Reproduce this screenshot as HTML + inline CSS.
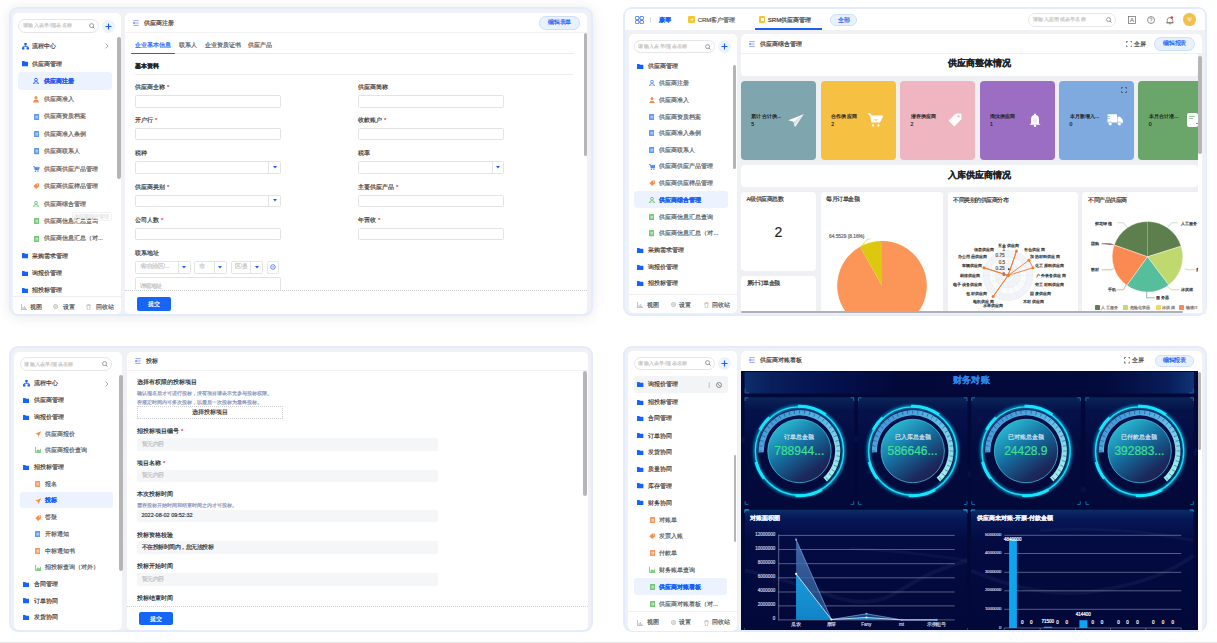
<!DOCTYPE html><html><head><meta charset="utf-8"><style>
html,body{margin:0;padding:0}
body{width:1217px;height:643px;position:relative;overflow:hidden;background:#fff;font-family:"Liberation Sans",sans-serif}
.a{position:absolute;display:block}
.t{position:absolute;white-space:nowrap;-webkit-text-stroke:.18px currentColor}
.t i{font-style:normal;display:inline-block;width:1em;text-align:center}
</style></head><body>
<div class="a" style="left:0.00px;top:641.50px;width:1217.00px;height:1.50px;background:#e6e6e6"></div>
<div class="a" style="left:8.70px;top:6.80px;width:584.10px;height:309.10px;border:2px solid #e3ecfc;border-radius:9px;background:#eff1f5;box-shadow:0 1px 14px rgba(0,0,0,.09);box-sizing:border-box"></div>
<div class="a" style="left:12.60px;top:12.60px;width:108.40px;height:301.30px;background:#fff;border-radius:5px"></div>
<div class="a" style="left:18.40px;top:19.00px;width:80.30px;height:14.40px;border:.7px solid #e6e6e6;border-radius:7.2px;box-sizing:border-box;background:#fff"></div>
<div class="t" style="left:22.90px;top:22.49px;height:7.42px;line-height:7.42px;font-size:5.3px;color:#c6c6c6;font-weight:normal;"><i>请</i><i>输</i><i>入</i><i>表</i><i>单</i>/<i>报</i><i>表</i><i>名</i><i>称</i></div>
<svg class="a" style="left:88.70px;top:23.20px;" width="6" height="6" viewBox="0 0 6 6"><circle cx="2.6" cy="2.6" r="2" fill="none" stroke="#777" stroke-width=".7"/><path d="M4 4L5.5 5.5" stroke="#777" stroke-width=".7"/></svg>
<div class="a" style="left:101.90px;top:19.50px;width:13.00px;height:13.00px;border-radius:50%;background:#edf3fe"></div>
<svg class="a" style="left:104.90px;top:22.50px;" width="7" height="7" viewBox="0 0 7 7"><path d="M3.5 .5V6.5M.5 3.5H6.5" stroke="#1d5ef6" stroke-width="1.1"/></svg>
<div class="a" style="left:117.00px;top:37.30px;width:3.80px;height:141.70px;background:#b5b5b5;border-radius:2px"></div>
<div class="a" style="left:18.10px;top:72.40px;width:93.50px;height:17.40px;background:#ecf3fe;border-radius:3px"></div>
<svg class="a" style="left:21.80px;top:43.00px;" width="7" height="6.5" viewBox="0 0 7 6.5"><rect x="2.3" y="0" width="2.4" height="2.2" fill="#1d5ef6"/><path d="M3.5 2.2V3.4M1.2 4.2V3.4H5.8V4.2" stroke="#1d5ef6" stroke-width=".8" fill="none"/><rect x="0" y="4.2" width="2.4" height="2.3" fill="#1d5ef6"/><rect x="4.6" y="4.2" width="2.4" height="2.3" fill="#1d5ef6"/></svg>
<div class="t" style="left:32.00px;top:42.00px;height:8.40px;line-height:8.40px;font-size:6px;color:#3a3a3a;font-weight:normal;"><i>流</i><i>程</i><i>中</i><i>心</i></div>
<svg class="a" style="left:21.90px;top:61.40px;" width="6.4" height="5.3" viewBox="0 0 6.4 5.3"><path d="M0 .5Q0 0 .5 0H2.3L3 .8H5.9Q6.4 .8 6.4 1.3V4.8Q6.4 5.3 5.9 5.3H.5Q0 5.3 0 4.8Z" fill="#1563ff"/></svg>
<div class="t" style="left:32.00px;top:59.80px;height:8.40px;line-height:8.40px;font-size:6px;color:#3a3a3a;font-weight:normal;"><i>供</i><i>应</i><i>商</i><i>管</i><i>理</i></div>
<svg class="a" style="left:33.20px;top:77.90px;" width="6" height="6.5" viewBox="0 0 6 6.5"><circle cx="3" cy="1.7" r="1.4" fill="none" stroke="#1d5ef6" stroke-width=".9"/><path d="M.5 6.2Q.5 3.6 3 3.6Q5.5 3.6 5.5 6.2Z" fill="none" stroke="#1d5ef6" stroke-width=".9"/></svg>
<div class="t" style="left:43.90px;top:76.90px;height:8.40px;line-height:8.40px;font-size:6px;color:#1d5ef6;font-weight:bold;"><i>供</i><i>应</i><i>商</i><i>注</i><i>册</i></div>
<svg class="a" style="left:33.20px;top:96.10px;" width="6" height="6.5" viewBox="0 0 6 6.5"><circle cx="3" cy="1.6" r="1.5" fill="#f68c4e"/><path d="M.2 6.5Q.2 3.5 3 3.5Q5.8 3.5 5.8 6.5Z" fill="#f68c4e"/></svg>
<div class="t" style="left:43.90px;top:95.10px;height:8.40px;line-height:8.40px;font-size:6px;color:#5a5a5a;font-weight:normal;"><i>供</i><i>应</i><i>商</i><i>准</i><i>入</i></div>
<svg class="a" style="left:33.50px;top:113.50px;" width="5.6" height="6.2" viewBox="0 0 5.6 6.2"><rect x="0" y="0" width="5.6" height="6.2" rx=".8" fill="#4f8af5" opacity=".9"/><path d="M1.4 2.3H4.2M1.4 3.9H4.2" stroke="#fff" stroke-width=".7"/></svg>
<div class="t" style="left:43.90px;top:112.30px;height:8.40px;line-height:8.40px;font-size:6px;color:#5a5a5a;font-weight:normal;"><i>供</i><i>应</i><i>商</i><i>资</i><i>质</i><i>档</i><i>案</i></div>
<svg class="a" style="left:33.50px;top:131.00px;" width="5.6" height="6.2" viewBox="0 0 5.6 6.2"><rect x="0" y="0" width="5.6" height="6.2" rx=".8" fill="#4f8af5" opacity=".9"/><path d="M1.4 2.3H4.2M1.4 3.9H4.2" stroke="#fff" stroke-width=".7"/></svg>
<div class="t" style="left:43.90px;top:129.80px;height:8.40px;line-height:8.40px;font-size:6px;color:#5a5a5a;font-weight:normal;"><i>供</i><i>应</i><i>商</i><i>准</i><i>入</i><i>条</i><i>例</i></div>
<svg class="a" style="left:33.50px;top:148.40px;" width="5.6" height="6.2" viewBox="0 0 5.6 6.2"><rect x="0" y="0" width="5.6" height="6.2" rx=".8" fill="#4f8af5" opacity=".9"/><path d="M1.4 2.3H4.2M1.4 3.9H4.2" stroke="#fff" stroke-width=".7"/></svg>
<div class="t" style="left:43.90px;top:147.20px;height:8.40px;line-height:8.40px;font-size:6px;color:#5a5a5a;font-weight:normal;"><i>供</i><i>应</i><i>商</i><i>联</i><i>系</i><i>人</i></div>
<svg class="a" style="left:33.20px;top:166.00px;" width="6.5" height="6" viewBox="0 0 6.5 6"><path d="M.2 .5H1.3L2 4H5.6L6.3 1.3H1.5Z" fill="#4f8af5" stroke="#4f8af5" stroke-width=".6" stroke-linejoin="round"/><circle cx="2.4" cy="5.3" r=".7" fill="#4f8af5"/><circle cx="5" cy="5.3" r=".7" fill="#4f8af5"/></svg>
<div class="t" style="left:43.90px;top:164.80px;height:8.40px;line-height:8.40px;font-size:6px;color:#5a5a5a;font-weight:normal;"><i>供</i><i>应</i><i>商</i><i>供</i><i>应</i><i>产</i><i>品</i><i>管</i><i>理</i></div>
<svg class="a" style="left:33.20px;top:183.20px;" width="6.5" height="6" viewBox="0 0 6.5 6"><path d="M.4 3.2L3.3 .4H6.1V3.2L3.2 6Z" fill="#f68c4e"/><circle cx="4.7" cy="1.8" r=".6" fill="#fff"/></svg>
<div class="t" style="left:43.90px;top:182.00px;height:8.40px;line-height:8.40px;font-size:6px;color:#5a5a5a;font-weight:normal;"><i>供</i><i>应</i><i>商</i><i>供</i><i>应</i><i>样</i><i>品</i><i>管</i><i>理</i></div>
<svg class="a" style="left:33.20px;top:200.50px;" width="6" height="6.5" viewBox="0 0 6 6.5"><circle cx="3" cy="1.7" r="1.4" fill="none" stroke="#66c166" stroke-width=".9"/><path d="M.5 6.2Q.5 3.6 3 3.6Q5.5 3.6 5.5 6.2Z" fill="none" stroke="#66c166" stroke-width=".9"/></svg>
<div class="t" style="left:43.90px;top:199.50px;height:8.40px;line-height:8.40px;font-size:6px;color:#5a5a5a;font-weight:normal;"><i>供</i><i>应</i><i>商</i><i>综</i><i>合</i><i>管</i><i>理</i></div>
<svg class="a" style="left:33.50px;top:218.30px;" width="5.6" height="6.2" viewBox="0 0 5.6 6.2"><rect x="0" y="0" width="5.6" height="6.2" rx=".8" fill="#66c166" opacity=".9"/><path d="M1.4 2.3H4.2M1.4 3.9H4.2" stroke="#fff" stroke-width=".7"/></svg>
<div class="t" style="left:43.90px;top:217.10px;height:8.40px;line-height:8.40px;font-size:6px;color:#5a5a5a;font-weight:normal;"><i>供</i><i>应</i><i>商</i><i>信</i><i>息</i><i>汇</i><i>总</i><i>查</i><i>询</i></div>
<svg class="a" style="left:33.50px;top:235.50px;" width="5.6" height="6.2" viewBox="0 0 5.6 6.2"><rect x="0" y="0" width="5.6" height="6.2" rx=".8" fill="#66c166" opacity=".9"/><path d="M1.4 2.3H4.2M1.4 3.9H4.2" stroke="#fff" stroke-width=".7"/></svg>
<div class="t" style="left:43.90px;top:234.30px;height:8.40px;line-height:8.40px;font-size:6px;color:#5a5a5a;font-weight:normal;"><i>供</i><i>应</i><i>商</i><i>信</i><i>息</i><i>汇</i><i>总</i><i>（</i><i>对</i>...</div>
<svg class="a" style="left:21.90px;top:253.40px;" width="6.4" height="5.3" viewBox="0 0 6.4 5.3"><path d="M0 .5Q0 0 .5 0H2.3L3 .8H5.9Q6.4 .8 6.4 1.3V4.8Q6.4 5.3 5.9 5.3H.5Q0 5.3 0 4.8Z" fill="#1563ff"/></svg>
<div class="t" style="left:32.00px;top:251.80px;height:8.40px;line-height:8.40px;font-size:6px;color:#3a3a3a;font-weight:normal;"><i>采</i><i>购</i><i>需</i><i>求</i><i>管</i><i>理</i></div>
<svg class="a" style="left:21.90px;top:270.60px;" width="6.4" height="5.3" viewBox="0 0 6.4 5.3"><path d="M0 .5Q0 0 .5 0H2.3L3 .8H5.9Q6.4 .8 6.4 1.3V4.8Q6.4 5.3 5.9 5.3H.5Q0 5.3 0 4.8Z" fill="#1563ff"/></svg>
<div class="t" style="left:32.00px;top:269.00px;height:8.40px;line-height:8.40px;font-size:6px;color:#3a3a3a;font-weight:normal;"><i>询</i><i>报</i><i>价</i><i>管</i><i>理</i></div>
<svg class="a" style="left:21.90px;top:288.00px;" width="6.4" height="5.3" viewBox="0 0 6.4 5.3"><path d="M0 .5Q0 0 .5 0H2.3L3 .8H5.9Q6.4 .8 6.4 1.3V4.8Q6.4 5.3 5.9 5.3H.5Q0 5.3 0 4.8Z" fill="#1563ff"/></svg>
<div class="t" style="left:32.00px;top:286.40px;height:8.40px;line-height:8.40px;font-size:6px;color:#3a3a3a;font-weight:normal;"><i>招</i><i>投</i><i>标</i><i>管</i><i>理</i></div>
<svg class="a" style="left:104.50px;top:43.00px;" width="4" height="6" viewBox="0 0 4 6"><path d="M.6 .5L3 3L.6 5.5" fill="none" stroke="#888" stroke-width=".7"/></svg>
<div class="a" style="left:71.50px;top:211.70px;width:40.50px;height:9.60px;border:.6px solid #f2f2f2;border-radius:2px;box-sizing:border-box"></div>
<div class="t" style="left:74.00px;top:213.00px;height:7.00px;line-height:7.00px;font-size:5px;color:#e6e6e6;font-weight:normal;"><i>供</i><i>应</i><i>商</i><i>综</i><i>合</i><i>管</i><i>理</i></div>
<div class="a" style="left:12.60px;top:296.00px;width:108.40px;height:0.60px;background:#eee"></div>
<svg class="a" style="left:21.00px;top:303.80px;" width="6" height="6" viewBox="0 0 6 6"><path d="M.5 0V5.5H6" fill="none" stroke="#999" stroke-width=".6"/><path d="M2 5V3M3.3 5V2M4.6 5V3.5" stroke="#999" stroke-width=".6"/></svg>
<div class="t" style="left:30.40px;top:302.60px;height:8.40px;line-height:8.40px;font-size:6px;color:#555;font-weight:normal;"><i>视</i><i>图</i></div>
<svg class="a" style="left:52.90px;top:304.30px;" width="5" height="5" viewBox="0 0 5 5"><circle cx="2.5" cy="2.5" r="2.1" fill="none" stroke="#aaa" stroke-width=".7"/><circle cx="2.5" cy="2.5" r=".8" fill="none" stroke="#aaa" stroke-width=".6"/></svg>
<div class="t" style="left:63.00px;top:302.60px;height:8.40px;line-height:8.40px;font-size:6px;color:#555;font-weight:normal;"><i>设</i><i>置</i></div>
<svg class="a" style="left:85.90px;top:303.80px;" width="5" height="6.2" viewBox="0 0 5 6.2"><path d="M.3 1.3H4.7M1.7 1.2V.4H3.3V1.2M.9 1.5L1.3 5.9H3.7L4.1 1.5" fill="none" stroke="#aaa" stroke-width=".6"/></svg>
<div class="t" style="left:95.80px;top:302.60px;height:8.40px;line-height:8.40px;font-size:6px;color:#555;font-weight:normal;"><i>回</i><i>收</i><i>站</i></div>
<div class="a" style="left:125.00px;top:12.60px;width:462.00px;height:301.30px;background:#fff;border-radius:5px"></div>
<div class="a" style="left:125.00px;top:32.40px;width:462.00px;height:0.80px;background:#f3f3f3"></div>
<svg class="a" style="left:133.00px;top:20.20px;" width="6" height="6" viewBox="0 0 6 6"><path d="M.3 .6H5.7M.3 3H5.7M.3 5.4H5.7" stroke="#8b9ef5" stroke-width=".9"/><rect x=".3" y="2.4" width="1.5" height="1.2" fill="#4c6df0"/></svg>
<div class="t" style="left:144.00px;top:19.00px;height:8.40px;line-height:8.40px;font-size:6px;color:#333;font-weight:normal;"><i>供</i><i>应</i><i>商</i><i>注</i><i>册</i></div>
<div class="a" style="left:539.10px;top:16.00px;width:40.90px;height:13.70px;background:#e8f1fe;border:.8px solid #cddffc;border-radius:6.8px;box-sizing:border-box"></div>
<div class="t" style="left:409.55px;width:300px;text-align:center;top:18.93px;height:7.84px;line-height:7.84px;font-size:5.6px;color:#1d5ef6;font-weight:normal;"><i>编</i><i>辑</i><i>表</i><i>单</i></div>
<div class="a" style="left:583.80px;top:33.00px;width:3.00px;height:123.00px;background:#b5b5b5;border-radius:2px"></div>
<div class="t" style="left:135.40px;top:41.30px;height:8.40px;line-height:8.40px;font-size:6px;color:#1d5ef6;font-weight:normal;"><i>企</i><i>业</i><i>基</i><i>本</i><i>信</i><i>息</i></div>
<div class="t" style="left:178.60px;top:41.30px;height:8.40px;line-height:8.40px;font-size:6px;color:#555;font-weight:normal;"><i>联</i><i>系</i><i>人</i></div>
<div class="t" style="left:204.80px;top:41.30px;height:8.40px;line-height:8.40px;font-size:6px;color:#555;font-weight:normal;"><i>企</i><i>业</i><i>资</i><i>质</i><i>证</i><i>书</i></div>
<div class="t" style="left:247.80px;top:41.30px;height:8.40px;line-height:8.40px;font-size:6px;color:#555;font-weight:normal;"><i>供</i><i>应</i><i>产</i><i>品</i></div>
<div class="a" style="left:130.80px;top:53.30px;width:442.60px;height:0.80px;background:#eaeaea"></div>
<div class="a" style="left:130.80px;top:52.60px;width:43.80px;height:1.50px;background:#1d5ef6;border-radius:1px"></div>
<div class="t" style="left:135.40px;top:62.40px;height:8.40px;line-height:8.40px;font-size:6px;color:#222;font-weight:bold;"><i>基</i><i>本</i><i>资</i><i>料</i></div>
<div class="a" style="left:135.40px;top:73.80px;width:438.00px;height:0.70px;background:#ededed"></div>
<div class="t" style="left:135.40px;top:82.80px;height:8.40px;line-height:8.40px;font-size:6px;color:#333;font-weight:normal;"><i>供</i><i>应</i><i>商</i><i>全</i><i>称</i><span style="color:#f04040"> *</span></div>
<div class="t" style="left:358.40px;top:82.80px;height:8.40px;line-height:8.40px;font-size:6px;color:#333;font-weight:normal;"><i>供</i><i>应</i><i>商</i><i>简</i><i>称</i></div>
<div class="a" style="left:135.40px;top:94.80px;width:145.90px;height:12.80px;border:.8px solid #e3e3e3;border-radius:1.5px;box-sizing:border-box;background:#fff"></div>
<div class="a" style="left:358.40px;top:94.80px;width:146.10px;height:12.80px;border:.8px solid #e3e3e3;border-radius:1.5px;box-sizing:border-box;background:#fff"></div>
<div class="t" style="left:135.40px;top:116.10px;height:8.40px;line-height:8.40px;font-size:6px;color:#333;font-weight:normal;"><i>开</i><i>户</i><i>行</i><span style="color:#f04040"> *</span></div>
<div class="t" style="left:358.40px;top:116.10px;height:8.40px;line-height:8.40px;font-size:6px;color:#333;font-weight:normal;"><i>收</i><i>款</i><i>账</i><i>户</i><span style="color:#f04040"> *</span></div>
<div class="a" style="left:135.40px;top:127.90px;width:145.90px;height:12.60px;border:.8px solid #e3e3e3;border-radius:1.5px;box-sizing:border-box;background:#fff"></div>
<div class="a" style="left:358.40px;top:127.90px;width:146.10px;height:12.60px;border:.8px solid #e3e3e3;border-radius:1.5px;box-sizing:border-box;background:#fff"></div>
<div class="t" style="left:135.40px;top:149.20px;height:8.40px;line-height:8.40px;font-size:6px;color:#333;font-weight:normal;"><i>税</i><i>种</i></div>
<div class="t" style="left:358.40px;top:149.20px;height:8.40px;line-height:8.40px;font-size:6px;color:#333;font-weight:normal;"><i>税</i><i>率</i></div>
<div class="a" style="left:135.40px;top:161.30px;width:145.90px;height:12.40px;border:.8px solid #e3e3e3;border-radius:1.5px;box-sizing:border-box;background:#fff"></div>
<div class="a" style="left:268.30px;top:161.30px;width:0.70px;height:12.40px;background:#e3e3e3"></div>
<svg class="a" style="left:272.70px;top:166.20px;" width="4" height="3" viewBox="0 0 4 3"><path d="M0 0H4L2 2.6Z" fill="#1d5ef6"/></svg>
<div class="a" style="left:358.40px;top:161.30px;width:146.10px;height:12.40px;border:.8px solid #e3e3e3;border-radius:1.5px;box-sizing:border-box;background:#fff"></div>
<div class="a" style="left:491.50px;top:161.30px;width:0.70px;height:12.40px;background:#e3e3e3"></div>
<svg class="a" style="left:495.90px;top:166.20px;" width="4" height="3" viewBox="0 0 4 3"><path d="M0 0H4L2 2.6Z" fill="#1d5ef6"/></svg>
<div class="t" style="left:135.40px;top:182.90px;height:8.40px;line-height:8.40px;font-size:6px;color:#333;font-weight:normal;"><i>供</i><i>应</i><i>商</i><i>类</i><i>别</i><span style="color:#f04040"> *</span></div>
<div class="t" style="left:358.40px;top:182.90px;height:8.40px;line-height:8.40px;font-size:6px;color:#333;font-weight:normal;"><i>主</i><i>要</i><i>供</i><i>应</i><i>产</i><i>品</i><span style="color:#f04040"> *</span></div>
<div class="a" style="left:135.40px;top:194.50px;width:145.90px;height:12.30px;border:.8px solid #e3e3e3;border-radius:1.5px;box-sizing:border-box;background:#fff"></div>
<div class="a" style="left:268.30px;top:194.50px;width:0.70px;height:12.30px;background:#e3e3e3"></div>
<svg class="a" style="left:272.70px;top:199.35px;" width="4" height="3" viewBox="0 0 4 3"><path d="M0 0H4L2 2.6Z" fill="#1d5ef6"/></svg>
<div class="a" style="left:358.40px;top:194.50px;width:146.10px;height:12.30px;border:.8px solid #e3e3e3;border-radius:1.5px;box-sizing:border-box;background:#fff"></div>
<div class="t" style="left:135.40px;top:215.80px;height:8.40px;line-height:8.40px;font-size:6px;color:#333;font-weight:normal;"><i>公</i><i>司</i><i>人</i><i>数</i><span style="color:#f04040"> *</span></div>
<div class="t" style="left:358.40px;top:215.80px;height:8.40px;line-height:8.40px;font-size:6px;color:#333;font-weight:normal;"><i>年</i><i>营</i><i>收</i><span style="color:#f04040"> *</span></div>
<div class="a" style="left:135.40px;top:227.50px;width:145.90px;height:12.90px;border:.8px solid #e3e3e3;border-radius:1.5px;box-sizing:border-box;background:#fff"></div>
<div class="a" style="left:358.40px;top:227.50px;width:146.10px;height:12.90px;border:.8px solid #e3e3e3;border-radius:1.5px;box-sizing:border-box;background:#fff"></div>
<div class="t" style="left:135.40px;top:249.00px;height:8.40px;line-height:8.40px;font-size:6px;color:#333;font-weight:normal;"><i>联</i><i>系</i><i>地</i><i>址</i></div>
<div class="a" style="left:135.40px;top:261.00px;width:55.20px;height:12.50px;border:.8px solid #e3e3e3;border-radius:1.5px;box-sizing:border-box;background:#fff"></div>
<div class="a" style="left:177.60px;top:261.00px;width:0.70px;height:12.50px;background:#e3e3e3"></div>
<svg class="a" style="left:182.00px;top:265.95px;" width="4" height="3" viewBox="0 0 4 3"><path d="M0 0H4L2 2.6Z" fill="#1d5ef6"/></svg>
<div class="t" style="left:139.90px;top:263.40px;height:7.70px;line-height:7.70px;font-size:5.5px;color:#c0c0c0;font-weight:normal;"><i>省</i>/<i>自</i><i>治</i><i>区</i>/...</div>
<div class="a" style="left:194.40px;top:261.00px;width:32.50px;height:12.50px;border:.8px solid #e3e3e3;border-radius:1.5px;box-sizing:border-box;background:#fff"></div>
<div class="a" style="left:213.90px;top:261.00px;width:0.70px;height:12.50px;background:#e3e3e3"></div>
<svg class="a" style="left:218.30px;top:265.95px;" width="4" height="3" viewBox="0 0 4 3"><path d="M0 0H4L2 2.6Z" fill="#1d5ef6"/></svg>
<div class="t" style="left:198.90px;top:263.40px;height:7.70px;line-height:7.70px;font-size:5.5px;color:#c0c0c0;font-weight:normal;"><i>市</i></div>
<div class="a" style="left:230.80px;top:261.00px;width:32.60px;height:12.50px;border:.8px solid #e3e3e3;border-radius:1.5px;box-sizing:border-box;background:#fff"></div>
<div class="a" style="left:250.40px;top:261.00px;width:0.70px;height:12.50px;background:#e3e3e3"></div>
<svg class="a" style="left:254.80px;top:265.95px;" width="4" height="3" viewBox="0 0 4 3"><path d="M0 0H4L2 2.6Z" fill="#1d5ef6"/></svg>
<div class="t" style="left:235.30px;top:263.40px;height:7.70px;line-height:7.70px;font-size:5.5px;color:#c0c0c0;font-weight:normal;"><i>区</i>/<i>县</i></div>
<div class="a" style="left:266.50px;top:261.00px;width:12.90px;height:12.50px;border:.8px dotted #d0d0d0;border-radius:1.5px;box-sizing:border-box"></div>
<svg class="a" style="left:270.00px;top:264.30px;" width="6" height="6" viewBox="0 0 6 6"><circle cx="3" cy="3" r="2.3" fill="none" stroke="#1d5ef6" stroke-width=".7"/><path d="M1.8 3H4.2" stroke="#1d5ef6" stroke-width=".6"/></svg>
<div class="a" style="left:135.40px;top:277.40px;width:145.90px;height:18.60px;border:.8px solid #e3e3e3;border-radius:1.5px;box-sizing:border-box;background:#fff"></div>
<div class="t" style="left:139.90px;top:282.85px;height:7.70px;line-height:7.70px;font-size:5.5px;color:#c0c0c0;font-weight:normal;"><i>详</i><i>细</i><i>地</i><i>址</i></div>
<div class="a" style="left:125.00px;top:290.40px;width:462.00px;height:23.50px;background:#fff;border-radius:0 0 5px 5px"></div>
<div class="a" style="left:125.00px;top:290.40px;width:462.00px;height:0.70px;border-top:.8px dotted #cfcfcf;box-sizing:border-box"></div>
<div class="a" style="left:137.40px;top:297.00px;width:33.30px;height:14.00px;background:#1765f6;border-radius:2px"></div>
<div class="t" style="left:4.00px;width:300px;text-align:center;top:299.80px;height:8.40px;line-height:8.40px;font-size:6px;color:#fff;font-weight:normal;"><i>提</i><i>交</i></div>
<div class="a" style="left:623.20px;top:6.80px;width:584.30px;height:309.10px;border:2px solid #e3ecfc;border-radius:9px;background:#eff1f5;box-sizing:border-box"></div>
<div class="a" style="left:625.20px;top:8.80px;width:580.30px;height:20.90px;background:#fff;border-radius:6px 6px 0 0"></div>
<svg class="a" style="left:635.00px;top:15.60px;" width="9" height="8.2" viewBox="0 0 9 8.2"><rect x=".4" y=".4" width="3.6" height="3.3" rx="1.2" fill="none" stroke="#1d5ef6" stroke-width=".9"/><rect x="5" y=".4" width="3.6" height="3.3" rx="1.2" fill="none" stroke="#1d5ef6" stroke-width=".9"/><rect x=".4" y="4.5" width="3.6" height="3.3" rx="1.2" fill="none" stroke="#1d5ef6" stroke-width=".9"/><rect x="5" y="4.5" width="3.6" height="3.3" rx="1.2" fill="none" stroke="#1d5ef6" stroke-width=".9"/></svg>
<div class="a" style="left:649.50px;top:16.50px;width:0.50px;height:6.50px;background:#e0e0e0"></div>
<div class="t" style="left:659.00px;top:15.50px;height:8.40px;line-height:8.40px;font-size:6px;color:#1d5ef6;font-weight:bold;"><i>康</i><i>琴</i></div>
<div class="a" style="left:688.00px;top:16.30px;width:6.80px;height:6.50px;background:#f7c531;border-radius:1px"></div>
<svg class="a" style="left:689.60px;top:17.80px;" width="4" height="3.5" viewBox="0 0 4 3.5"><path d="M3.6 .2L.2 1.8L1.6 2.2L2 3.4Z" fill="#fff"/></svg>
<div class="t" style="left:697.70px;top:15.50px;height:8.40px;line-height:8.40px;font-size:6px;color:#555;font-weight:normal;">CRM<i>客</i><i>户</i><i>管</i><i>理</i></div>
<div class="a" style="left:759.00px;top:16.30px;width:6.30px;height:6.50px;background:#f7c531;border-radius:1px"></div>
<div class="a" style="left:760.50px;top:17.80px;width:3.30px;height:3.50px;background:#fff;border-radius:.5px"></div>
<div class="t" style="left:767.80px;top:15.50px;height:8.40px;line-height:8.40px;font-size:6px;color:#333;font-weight:normal;">SRM<i>供</i><i>应</i><i>商</i><i>管</i><i>理</i></div>
<div class="a" style="left:754.50px;top:28.20px;width:67.30px;height:1.40px;background:#1d5ef6"></div>
<div class="a" style="left:830.30px;top:13.50px;width:26.90px;height:12.20px;background:#e8f1fe;border:.8px solid #cddffc;border-radius:6.1px;box-sizing:border-box"></div>
<div class="t" style="left:693.75px;width:300px;text-align:center;top:15.54px;height:8.12px;line-height:8.12px;font-size:5.8px;color:#1d5ef6;font-weight:normal;"><i>全</i><i>部</i></div>
<div class="a" style="left:1028.40px;top:12.70px;width:87.40px;height:13.90px;border:.7px solid #e6e6e6;border-radius:7.0px;box-sizing:border-box;background:#fff"></div>
<div class="t" style="left:1032.90px;top:15.94px;height:7.42px;line-height:7.42px;font-size:5.3px;color:#c6c6c6;font-weight:normal;"><i>请</i><i>输</i><i>入</i><i>应</i><i>用</i><i>或</i><i>表</i><i>单</i><i>名</i><i>称</i></div>
<svg class="a" style="left:1105.80px;top:16.65px;" width="6" height="6" viewBox="0 0 6 6"><circle cx="2.6" cy="2.6" r="2" fill="none" stroke="#777" stroke-width=".7"/><path d="M4 4L5.5 5.5" stroke="#777" stroke-width=".7"/></svg>
<svg class="a" style="left:1127.50px;top:16.00px;" width="8" height="8" viewBox="0 0 8 8"><rect x=".4" y=".4" width="7.2" height="7.2" fill="none" stroke="#666" stroke-width=".7"/><path d="M2 6L4 2L6 6M2.8 4.6H5.2" fill="none" stroke="#666" stroke-width=".6"/></svg>
<svg class="a" style="left:1147.00px;top:16.00px;" width="8" height="8" viewBox="0 0 8 8"><circle cx="4" cy="4" r="3.5" fill="none" stroke="#666" stroke-width=".7"/><path d="M2.8 3Q2.8 1.9 4 1.9Q5.2 1.9 5.2 3Q5.2 3.8 4 4.3V5M4 5.8V6.3" fill="none" stroke="#666" stroke-width=".6"/></svg>
<svg class="a" style="left:1166.00px;top:15.50px;" width="8" height="9" viewBox="0 0 8 9"><path d="M1.2 6.8V4Q1.2 1.5 4 1.5Q6.8 1.5 6.8 4V6.8H.5H7.5M3 7.8H5" fill="none" stroke="#666" stroke-width=".7"/><circle cx="5.8" cy="1.6" r="1.3" fill="#f03d3d"/></svg>
<div class="a" style="left:1183.10px;top:13.20px;width:12.60px;height:12.60px;background:#f2c14b;border-radius:50%"></div>
<svg class="a" style="left:1187.00px;top:17.00px;" width="5" height="5" viewBox="0 0 5 5"><path d="M.5 .5L2.5 2L4.5 .5M.5 2.3L2.5 3.8L4.5 2.3" fill="none" stroke="#fff" stroke-width=".8"/></svg>
<div class="a" style="left:628.60px;top:33.80px;width:108.50px;height:279.10px;background:#fff;border-radius:5px"></div>
<div class="a" style="left:633.80px;top:40.40px;width:81.20px;height:12.40px;border:.7px solid #e6e6e6;border-radius:6.2px;box-sizing:border-box;background:#fff"></div>
<div class="t" style="left:638.30px;top:42.89px;height:7.42px;line-height:7.42px;font-size:5.3px;color:#c6c6c6;font-weight:normal;"><i>请</i><i>输</i><i>入</i><i>表</i><i>单</i>/<i>报</i><i>表</i><i>名</i><i>称</i></div>
<svg class="a" style="left:705.00px;top:43.60px;" width="6" height="6" viewBox="0 0 6 6"><circle cx="2.6" cy="2.6" r="2" fill="none" stroke="#777" stroke-width=".7"/><path d="M4 4L5.5 5.5" stroke="#777" stroke-width=".7"/></svg>
<div class="a" style="left:717.60px;top:40.20px;width:13.00px;height:13.00px;border-radius:50%;background:#edf3fe"></div>
<svg class="a" style="left:720.60px;top:43.20px;" width="7" height="7" viewBox="0 0 7 7"><path d="M3.5 .5V6.5M.5 3.5H6.5" stroke="#1d5ef6" stroke-width="1.1"/></svg>
<div class="a" style="left:733.00px;top:64.50px;width:3.10px;height:104.70px;background:#b5b5b5;border-radius:2px"></div>
<div class="a" style="left:633.70px;top:191.20px;width:94.00px;height:16.80px;background:#ecf3fe;border-radius:3px"></div>
<svg class="a" style="left:637.20px;top:63.60px;" width="6.4" height="5.3" viewBox="0 0 6.4 5.3"><path d="M0 .5Q0 0 .5 0H2.3L3 .8H5.9Q6.4 .8 6.4 1.3V4.8Q6.4 5.3 5.9 5.3H.5Q0 5.3 0 4.8Z" fill="#1563ff"/></svg>
<div class="t" style="left:647.80px;top:62.00px;height:8.40px;line-height:8.40px;font-size:6px;color:#3a3a3a;font-weight:normal;"><i>供</i><i>应</i><i>商</i><i>管</i><i>理</i></div>
<svg class="a" style="left:648.60px;top:79.70px;" width="6" height="6.5" viewBox="0 0 6 6.5"><circle cx="3" cy="1.7" r="1.4" fill="none" stroke="#4f8af5" stroke-width=".9"/><path d="M.5 6.2Q.5 3.6 3 3.6Q5.5 3.6 5.5 6.2Z" fill="none" stroke="#4f8af5" stroke-width=".9"/></svg>
<div class="t" style="left:659.40px;top:78.70px;height:8.40px;line-height:8.40px;font-size:6px;color:#5a5a5a;font-weight:normal;"><i>供</i><i>应</i><i>商</i><i>注</i><i>册</i></div>
<svg class="a" style="left:648.60px;top:96.70px;" width="6" height="6.5" viewBox="0 0 6 6.5"><circle cx="3" cy="1.6" r="1.5" fill="#f68c4e"/><path d="M.2 6.5Q.2 3.5 3 3.5Q5.8 3.5 5.8 6.5Z" fill="#f68c4e"/></svg>
<div class="t" style="left:659.40px;top:95.70px;height:8.40px;line-height:8.40px;font-size:6px;color:#5a5a5a;font-weight:normal;"><i>供</i><i>应</i><i>商</i><i>准</i><i>入</i></div>
<svg class="a" style="left:648.90px;top:113.70px;" width="5.6" height="6.2" viewBox="0 0 5.6 6.2"><rect x="0" y="0" width="5.6" height="6.2" rx=".8" fill="#4f8af5" opacity=".9"/><path d="M1.4 2.3H4.2M1.4 3.9H4.2" stroke="#fff" stroke-width=".7"/></svg>
<div class="t" style="left:659.40px;top:112.50px;height:8.40px;line-height:8.40px;font-size:6px;color:#5a5a5a;font-weight:normal;"><i>供</i><i>应</i><i>商</i><i>资</i><i>质</i><i>档</i><i>案</i></div>
<svg class="a" style="left:648.90px;top:130.20px;" width="5.6" height="6.2" viewBox="0 0 5.6 6.2"><rect x="0" y="0" width="5.6" height="6.2" rx=".8" fill="#4f8af5" opacity=".9"/><path d="M1.4 2.3H4.2M1.4 3.9H4.2" stroke="#fff" stroke-width=".7"/></svg>
<div class="t" style="left:659.40px;top:129.00px;height:8.40px;line-height:8.40px;font-size:6px;color:#5a5a5a;font-weight:normal;"><i>供</i><i>应</i><i>商</i><i>准</i><i>入</i><i>条</i><i>例</i></div>
<svg class="a" style="left:648.90px;top:147.00px;" width="5.6" height="6.2" viewBox="0 0 5.6 6.2"><rect x="0" y="0" width="5.6" height="6.2" rx=".8" fill="#4f8af5" opacity=".9"/><path d="M1.4 2.3H4.2M1.4 3.9H4.2" stroke="#fff" stroke-width=".7"/></svg>
<div class="t" style="left:659.40px;top:145.80px;height:8.40px;line-height:8.40px;font-size:6px;color:#5a5a5a;font-weight:normal;"><i>供</i><i>应</i><i>商</i><i>联</i><i>系</i><i>人</i></div>
<svg class="a" style="left:648.60px;top:163.60px;" width="6.5" height="6" viewBox="0 0 6.5 6"><path d="M.2 .5H1.3L2 4H5.6L6.3 1.3H1.5Z" fill="#4f8af5" stroke="#4f8af5" stroke-width=".6" stroke-linejoin="round"/><circle cx="2.4" cy="5.3" r=".7" fill="#4f8af5"/><circle cx="5" cy="5.3" r=".7" fill="#4f8af5"/></svg>
<div class="t" style="left:659.40px;top:162.40px;height:8.40px;line-height:8.40px;font-size:6px;color:#5a5a5a;font-weight:normal;"><i>供</i><i>应</i><i>商</i><i>供</i><i>应</i><i>产</i><i>品</i><i>管</i><i>理</i></div>
<svg class="a" style="left:648.60px;top:180.40px;" width="6.5" height="6" viewBox="0 0 6.5 6"><path d="M.4 3.2L3.3 .4H6.1V3.2L3.2 6Z" fill="#f68c4e"/><circle cx="4.7" cy="1.8" r=".6" fill="#fff"/></svg>
<div class="t" style="left:659.40px;top:179.20px;height:8.40px;line-height:8.40px;font-size:6px;color:#5a5a5a;font-weight:normal;"><i>供</i><i>应</i><i>商</i><i>供</i><i>应</i><i>样</i><i>品</i><i>管</i><i>理</i></div>
<svg class="a" style="left:648.60px;top:196.80px;" width="6" height="6.5" viewBox="0 0 6 6.5"><circle cx="3" cy="1.7" r="1.4" fill="none" stroke="#66c166" stroke-width=".9"/><path d="M.5 6.2Q.5 3.6 3 3.6Q5.5 3.6 5.5 6.2Z" fill="none" stroke="#66c166" stroke-width=".9"/></svg>
<div class="t" style="left:659.40px;top:195.80px;height:8.40px;line-height:8.40px;font-size:6px;color:#1d5ef6;font-weight:bold;"><i>供</i><i>应</i><i>商</i><i>综</i><i>合</i><i>管</i><i>理</i></div>
<svg class="a" style="left:648.90px;top:214.20px;" width="5.6" height="6.2" viewBox="0 0 5.6 6.2"><rect x="0" y="0" width="5.6" height="6.2" rx=".8" fill="#66c166" opacity=".9"/><path d="M1.4 2.3H4.2M1.4 3.9H4.2" stroke="#fff" stroke-width=".7"/></svg>
<div class="t" style="left:659.40px;top:213.00px;height:8.40px;line-height:8.40px;font-size:6px;color:#5a5a5a;font-weight:normal;"><i>供</i><i>应</i><i>商</i><i>信</i><i>息</i><i>汇</i><i>总</i><i>查</i><i>询</i></div>
<svg class="a" style="left:648.90px;top:230.40px;" width="5.6" height="6.2" viewBox="0 0 5.6 6.2"><rect x="0" y="0" width="5.6" height="6.2" rx=".8" fill="#66c166" opacity=".9"/><path d="M1.4 2.3H4.2M1.4 3.9H4.2" stroke="#fff" stroke-width=".7"/></svg>
<div class="t" style="left:659.40px;top:229.20px;height:8.40px;line-height:8.40px;font-size:6px;color:#5a5a5a;font-weight:normal;"><i>供</i><i>应</i><i>商</i><i>信</i><i>息</i><i>汇</i><i>总</i><i>（</i><i>对</i>...</div>
<svg class="a" style="left:637.20px;top:248.00px;" width="6.4" height="5.3" viewBox="0 0 6.4 5.3"><path d="M0 .5Q0 0 .5 0H2.3L3 .8H5.9Q6.4 .8 6.4 1.3V4.8Q6.4 5.3 5.9 5.3H.5Q0 5.3 0 4.8Z" fill="#1563ff"/></svg>
<div class="t" style="left:647.80px;top:246.40px;height:8.40px;line-height:8.40px;font-size:6px;color:#3a3a3a;font-weight:normal;"><i>采</i><i>购</i><i>需</i><i>求</i><i>管</i><i>理</i></div>
<svg class="a" style="left:637.20px;top:264.60px;" width="6.4" height="5.3" viewBox="0 0 6.4 5.3"><path d="M0 .5Q0 0 .5 0H2.3L3 .8H5.9Q6.4 .8 6.4 1.3V4.8Q6.4 5.3 5.9 5.3H.5Q0 5.3 0 4.8Z" fill="#1563ff"/></svg>
<div class="t" style="left:647.80px;top:263.00px;height:8.40px;line-height:8.40px;font-size:6px;color:#3a3a3a;font-weight:normal;"><i>询</i><i>报</i><i>价</i><i>管</i><i>理</i></div>
<svg class="a" style="left:637.20px;top:281.00px;" width="6.4" height="5.3" viewBox="0 0 6.4 5.3"><path d="M0 .5Q0 0 .5 0H2.3L3 .8H5.9Q6.4 .8 6.4 1.3V4.8Q6.4 5.3 5.9 5.3H.5Q0 5.3 0 4.8Z" fill="#1563ff"/></svg>
<div class="t" style="left:647.80px;top:279.40px;height:8.40px;line-height:8.40px;font-size:6px;color:#3a3a3a;font-weight:normal;"><i>招</i><i>投</i><i>标</i><i>管</i><i>理</i></div>
<div class="a" style="left:628.60px;top:294.40px;width:108.50px;height:0.60px;background:#eee"></div>
<svg class="a" style="left:636.70px;top:301.80px;" width="6" height="6" viewBox="0 0 6 6"><path d="M.5 0V5.5H6" fill="none" stroke="#999" stroke-width=".6"/><path d="M2 5V3M3.3 5V2M4.6 5V3.5" stroke="#999" stroke-width=".6"/></svg>
<div class="t" style="left:646.70px;top:300.60px;height:8.40px;line-height:8.40px;font-size:6px;color:#555;font-weight:normal;"><i>视</i><i>图</i></div>
<svg class="a" style="left:671.40px;top:302.30px;" width="5" height="5" viewBox="0 0 5 5"><circle cx="2.5" cy="2.5" r="2.1" fill="none" stroke="#aaa" stroke-width=".7"/><circle cx="2.5" cy="2.5" r=".8" fill="none" stroke="#aaa" stroke-width=".6"/></svg>
<div class="t" style="left:679.00px;top:300.60px;height:8.40px;line-height:8.40px;font-size:6px;color:#555;font-weight:normal;"><i>设</i><i>置</i></div>
<svg class="a" style="left:704.10px;top:301.80px;" width="5" height="6.2" viewBox="0 0 5 6.2"><path d="M.3 1.3H4.7M1.7 1.2V.4H3.3V1.2M.9 1.5L1.3 5.9H3.7L4.1 1.5" fill="none" stroke="#aaa" stroke-width=".6"/></svg>
<div class="t" style="left:712.10px;top:300.60px;height:8.40px;line-height:8.40px;font-size:6px;color:#555;font-weight:normal;"><i>回</i><i>收</i><i>站</i></div>
<div class="a" style="left:741.00px;top:33.80px;width:461.00px;height:279.20px;background:#fff;border-radius:5px"></div>
<svg class="a" style="left:748.90px;top:40.80px;" width="6" height="6" viewBox="0 0 6 6"><path d="M.3 .6H5.7M.3 3H5.7M.3 5.4H5.7" stroke="#8b9ef5" stroke-width=".9"/><rect x=".3" y="2.4" width="1.5" height="1.2" fill="#4c6df0"/></svg>
<div class="t" style="left:759.80px;top:39.60px;height:8.40px;line-height:8.40px;font-size:6px;color:#333;font-weight:normal;"><i>供</i><i>应</i><i>商</i><i>综</i><i>合</i><i>管</i><i>理</i></div>
<svg class="a" style="left:1125.60px;top:40.80px;" width="6.4" height="6.4" viewBox="0 0 6.4 6.4"><path d="M.4 2V.4H2M4.4 .4H6V2M6 4.4V6H4.4M2 6H.4V4.4" fill="none" stroke="#555" stroke-width=".8"/></svg>
<div class="t" style="left:1134.00px;top:39.60px;height:8.40px;line-height:8.40px;font-size:6px;color:#444;font-weight:normal;"><i>全</i><i>屏</i></div>
<div class="a" style="left:1154.20px;top:37.00px;width:40.80px;height:13.60px;background:#e8f1fe;border:.8px solid #cddffc;border-radius:6.8px;box-sizing:border-box"></div>
<div class="t" style="left:1024.60px;width:300px;text-align:center;top:39.88px;height:7.84px;line-height:7.84px;font-size:5.6px;color:#1d5ef6;font-weight:normal;"><i>编</i><i>辑</i><i>报</i><i>表</i></div>
<div class="a" style="left:741.00px;top:52.90px;width:461.00px;height:260.10px;background:#eef0f4"></div>
<div class="a" style="left:741.00px;top:53.80px;width:457.00px;height:22.60px;background:#fff;border-radius:0 0 4px 4px"></div>
<div class="t" style="left:829.40px;width:300px;text-align:center;top:57.23px;height:12.74px;line-height:12.74px;font-size:9.1px;color:#222;font-weight:bold;"><i>供</i><i>应</i><i>商</i><i>整</i><i>体</i><i>情</i><i>况</i></div>
<div class="a" style="left:740.80px;top:80.80px;width:75.40px;height:79.10px;background:#7fa6ae;border-radius:4px"></div>
<div class="t" style="left:751.30px;top:112.83px;height:7.14px;line-height:7.14px;font-size:5.1px;color:#222;font-weight:normal;"><i>累</i><i>计</i><i>合</i><i>计</i><i>供</i>...</div>
<div class="t" style="left:751.30px;top:121.03px;height:7.14px;line-height:7.14px;font-size:5.1px;color:#222;font-weight:normal;">5</div>
<svg class="a" style="left:787.80px;top:113.50px;" width="16" height="13" viewBox="0 0 16 13"><path d="M15.6 .3L.3 6.2L5.6 7.8L7.4 12.7Z" fill="#fff"/><path d="M15.6 .3L5.6 7.8L6.2 12.7L8.6 9.2Z" fill="#d8e4e7"/></svg>
<div class="a" style="left:820.70px;top:80.80px;width:75.00px;height:79.10px;background:#f6c043;border-radius:4px"></div>
<div class="t" style="left:831.20px;top:112.83px;height:7.14px;line-height:7.14px;font-size:5.1px;color:#222;font-weight:normal;"><i>合</i><i>作</i><i>供</i><i>应</i><i>商</i></div>
<div class="t" style="left:831.20px;top:121.03px;height:7.14px;line-height:7.14px;font-size:5.1px;color:#222;font-weight:normal;">2</div>
<svg class="a" style="left:868.20px;top:113.00px;" width="15" height="14" viewBox="0 0 15 14"><path d="M.5 .6L2.6 1.4L3.8 9H11.6L14.4 3.2H3.2Z" fill="#fff" stroke="#fff" stroke-width="1.2" stroke-linejoin="round"/><circle cx="5" cy="12.4" r="1.1" fill="#fff"/><circle cx="10.4" cy="12.4" r="1.1" fill="#fff"/><path d="M6.6 6.6Q8 7.6 9.4 6.6" stroke="#f6c043" stroke-width="1" fill="none"/></svg>
<div class="a" style="left:900.00px;top:80.80px;width:74.80px;height:79.10px;background:#efb5c0;border-radius:4px"></div>
<div class="t" style="left:910.50px;top:112.83px;height:7.14px;line-height:7.14px;font-size:5.1px;color:#222;font-weight:normal;"><i>潜</i><i>在</i><i>供</i><i>应</i><i>商</i></div>
<div class="t" style="left:910.50px;top:121.03px;height:7.14px;line-height:7.14px;font-size:5.1px;color:#222;font-weight:normal;">2</div>
<svg class="a" style="left:948.00px;top:113.00px;" width="14" height="14" viewBox="0 0 14 14"><path d="M.6 7.8L7.8 .6H13.4V6.2L6.2 13.4Z" fill="#fff"/><circle cx="10.6" cy="3.4" r="1.1" fill="#efb5c0"/></svg>
<div class="a" style="left:979.50px;top:80.80px;width:75.00px;height:79.10px;background:#9b6ec3;border-radius:4px"></div>
<div class="t" style="left:990.00px;top:112.83px;height:7.14px;line-height:7.14px;font-size:5.1px;color:#222;font-weight:normal;"><i>淘</i><i>汰</i><i>供</i><i>应</i><i>商</i></div>
<div class="t" style="left:990.00px;top:121.03px;height:7.14px;line-height:7.14px;font-size:5.1px;color:#222;font-weight:normal;">1</div>
<svg class="a" style="left:1028.50px;top:113.00px;" width="12" height="14" viewBox="0 0 12 14"><path d="M2 10.6V6.4Q2 2 6 2Q10 2 10 6.4V10.6L11.6 11.8H.4Z" fill="#fff"/><circle cx="6" cy="1.4" r="1" fill="#fff"/><circle cx="6" cy="12.8" r="1.2" fill="#fff"/><path d="M5 5.5V9.5M7 6V9.5" stroke="#c9b0e0" stroke-width=".6"/></svg>
<div class="a" style="left:1059.00px;top:80.80px;width:75.00px;height:79.10px;background:#7eaadf;border-radius:4px"></div>
<div class="t" style="left:1069.50px;top:112.83px;height:7.14px;line-height:7.14px;font-size:5.1px;color:#222;font-weight:normal;"><i>本</i><i>月</i><i>新</i><i>增</i><i>入</i>...</div>
<div class="t" style="left:1069.50px;top:121.03px;height:7.14px;line-height:7.14px;font-size:5.1px;color:#222;font-weight:normal;">0</div>
<svg class="a" style="left:1105.50px;top:114.00px;" width="17" height="12" viewBox="0 0 17 12"><rect x="1.5" y=".3" width="9.5" height="8.2" rx=".6" fill="#fff"/><path d="M11.5 2.8H14.2L16.8 6V9H11.5Z" fill="#fff"/><circle cx="4.2" cy="9.8" r="1.9" fill="#fff" stroke="#7eaadf" stroke-width=".6"/><circle cx="13.4" cy="9.8" r="1.9" fill="#fff" stroke="#7eaadf" stroke-width=".6"/><path d="M0 2.5H4M.5 4.5H4" stroke="#7eaadf" stroke-width=".7"/></svg>
<div class="a" style="left:1138.20px;top:80.80px;width:59.80px;height:79.10px;background:#6aa66a;border-radius:4px 0 0 4px"></div>
<div class="t" style="left:1148.70px;top:112.83px;height:7.14px;line-height:7.14px;font-size:5.1px;color:#222;font-weight:normal;"><i>本</i><i>月</i><i>合</i><i>计</i><i>准</i>...</div>
<div class="t" style="left:1148.70px;top:121.03px;height:7.14px;line-height:7.14px;font-size:5.1px;color:#222;font-weight:normal;">0</div>
<div class="a" style="left:1187.20px;top:112.90px;width:10.80px;height:14.40px;background:#fff;border-radius:2px"></div>
<div class="a" style="left:1189.20px;top:116.00px;width:5.50px;height:0.80px;background:#9cc79c"></div>
<div class="a" style="left:1189.20px;top:118.20px;width:3.50px;height:0.70px;background:#9cc79c"></div>
<div class="a" style="left:1195.70px;top:123.00px;width:2.50px;height:0.70px;background:#6aa66a"></div>
<svg class="a" style="left:1121.00px;top:86.50px;" width="6" height="6" viewBox="0 0 6 6"><path d="M.4 2V.4H2M4 .4H5.6V2M5.6 4V5.6H4M2 5.6H.4V4" fill="none" stroke="#333" stroke-width=".6"/></svg>
<div class="a" style="left:1198.20px;top:55.70px;width:3.70px;height:98.00px;background:#b5b5b5;border-radius:2px"></div>
<div class="a" style="left:741.00px;top:164.50px;width:457.00px;height:22.90px;background:#fff;border-radius:4px"></div>
<div class="t" style="left:829.40px;width:300px;text-align:center;top:168.93px;height:12.74px;line-height:12.74px;font-size:9.1px;color:#222;font-weight:bold;"><i>入</i><i>库</i><i>供</i><i>应</i><i>商</i><i>情</i><i>况</i></div>
<div class="a" style="left:741.00px;top:191.90px;width:74.60px;height:78.80px;background:#fff;border-radius:4px"></div>
<div class="t" style="left:746.50px;top:196.45px;height:7.70px;line-height:7.70px;font-size:5.5px;color:#333;font-weight:normal;">A<i>级</i><i>供</i><i>应</i><i>商</i><i>总</i><i>数</i></div>
<div class="t" style="left:628.30px;width:300px;text-align:center;top:222.90px;height:19.60px;line-height:19.60px;font-size:14px;color:#222;font-weight:normal;">2</div>
<div class="a" style="left:741.00px;top:275.70px;width:74.60px;height:37.30px;background:#fff;border-radius:4px 4px 0 0"></div>
<div class="t" style="left:746.50px;top:280.15px;height:7.70px;line-height:7.70px;font-size:5.5px;color:#333;font-weight:normal;"><i>累</i><i>计</i><i>订</i><i>单</i><i>金</i><i>额</i></div>
<div class="a" style="left:820.60px;top:191.90px;width:122.70px;height:121.10px;background:#fff;border-radius:4px 4px 0 0"></div>
<div class="t" style="left:826.00px;top:196.45px;height:7.70px;line-height:7.70px;font-size:5.5px;color:#333;font-weight:normal;"><i>每</i><i>月</i><i>订</i><i>单</i><i>金</i><i>额</i></div>
<svg class="a" style="left:820.6px;top:191.9px" width="122.7" height="121.1" viewBox="820.6 191.9 122.7 121.1"><path d="M881.60 285.70L881.60 240.90A44.8 44.8 0 1 1 859.61 246.67Z" fill="#fc9658"/><path d="M881.60 285.70L859.61 246.67A44.8 44.8 0 0 1 881.60 240.90Z" fill="#dbc80f"/><path d="M860 247.5L866 240L870 238.5" fill="none" stroke="#dbc80f" stroke-width=".6"/></svg>
<div class="t" style="left:829.00px;top:234.34px;height:6.72px;line-height:6.72px;font-size:4.8px;color:#666;font-weight:normal;">64.5529 (8.16%)</div>
<div class="a" style="left:948.40px;top:192.20px;width:129.60px;height:120.80px;background:#fff;border-radius:4px 4px 0 0"></div>
<div class="t" style="left:953.30px;top:196.55px;height:7.70px;line-height:7.70px;font-size:5.5px;color:#333;font-weight:normal;"><i>不</i><i>同</i><i>类</i><i>别</i><i>的</i><i>供</i><i>应</i><i>商</i><i>分</i><i>布</i></div>
<svg class="a" style="left:948.4px;top:192.2px" width="129.6" height="120.8" viewBox="948.4 192.2 129.6 120.8"><circle cx="1008.5" cy="275.7" r="25.10" fill="#f2f4f9"/><circle cx="1008.5" cy="275.7" r="18.83" fill="#fafbfd"/><circle cx="1008.5" cy="275.7" r="12.55" fill="#f2f4f9"/><circle cx="1008.5" cy="275.7" r="6.28" fill="#fafbfd"/><circle cx="1008.5" cy="275.7" r="6.28" fill="none" stroke="#dfe3ec" stroke-width=".4"/><circle cx="1008.5" cy="275.7" r="12.55" fill="none" stroke="#dfe3ec" stroke-width=".4"/><circle cx="1008.5" cy="275.7" r="18.83" fill="none" stroke="#dfe3ec" stroke-width=".4"/><circle cx="1008.5" cy="275.7" r="25.10" fill="none" stroke="#dfe3ec" stroke-width=".4"/><path d="M1008.5 275.7L1008.50 250.60" stroke="#e3e7ef" stroke-width=".35"/><path d="M1008.5 275.7L1018.11 252.51" stroke="#e3e7ef" stroke-width=".35"/><path d="M1008.5 275.7L1026.25 257.95" stroke="#e3e7ef" stroke-width=".35"/><path d="M1008.5 275.7L1031.69 266.09" stroke="#e3e7ef" stroke-width=".35"/><path d="M1008.5 275.7L1033.60 275.70" stroke="#e3e7ef" stroke-width=".35"/><path d="M1008.5 275.7L1031.69 285.31" stroke="#e3e7ef" stroke-width=".35"/><path d="M1008.5 275.7L1026.25 293.45" stroke="#e3e7ef" stroke-width=".35"/><path d="M1008.5 275.7L1018.11 298.89" stroke="#e3e7ef" stroke-width=".35"/><path d="M1008.5 275.7L1008.50 300.80" stroke="#e3e7ef" stroke-width=".35"/><path d="M1008.5 275.7L998.89 298.89" stroke="#e3e7ef" stroke-width=".35"/><path d="M1008.5 275.7L990.75 293.45" stroke="#e3e7ef" stroke-width=".35"/><path d="M1008.5 275.7L985.31 285.31" stroke="#e3e7ef" stroke-width=".35"/><path d="M1008.5 275.7L983.40 275.70" stroke="#e3e7ef" stroke-width=".35"/><path d="M1008.5 275.7L985.31 266.09" stroke="#e3e7ef" stroke-width=".35"/><path d="M1008.5 275.7L990.75 257.95" stroke="#e3e7ef" stroke-width=".35"/><path d="M1008.5 275.7L998.89 252.51" stroke="#e3e7ef" stroke-width=".35"/><path d="M1008.5 275.7L1016.9 251.2L1008.5 275.7L1029.4 260.4L1033.4 267.9L1008.5 275.7L984.3 267.9L1008.5 275.7L993.5 296.7Z" stroke="#ee7b2f" stroke-width=".9" fill="none" stroke-linejoin="round"/><circle cx="1016.9" cy="251.2" r="1.5" fill="#ee7b2f"/><circle cx="1029.4" cy="260.4" r="1.5" fill="#ee7b2f"/><circle cx="1033.4" cy="267.9" r="1.5" fill="#ee7b2f"/><circle cx="984.3" cy="267.9" r="1.5" fill="#ee7b2f"/><circle cx="993.5" cy="296.7" r="1.5" fill="#ee7b2f"/><circle cx="1008.5" cy="275.7" r="1.8" fill="#ee7b2f"/><circle cx="1009.2" cy="269.4" r=".9" fill="#333"/></svg>
<div class="t" style="left:858.50px;width:300px;text-align:center;top:242.86px;height:5.88px;line-height:5.88px;font-size:4.2px;color:#333;font-weight:normal;"><i>五</i><i>金</i><i>供</i><i>应</i><i>商</i></div>
<div class="t" style="left:884.20px;width:300px;text-align:center;top:247.06px;height:5.88px;line-height:5.88px;font-size:4.2px;color:#333;font-weight:normal;"><i>有</i><i>色</i><i>供</i><i>应</i><i>商</i></div>
<div class="t" style="left:833.90px;width:300px;text-align:center;top:247.06px;height:5.88px;line-height:5.88px;font-size:4.2px;color:#333;font-weight:normal;"><i>信</i><i>息</i><i>供</i><i>应</i><i>商</i></div>
<div class="t" style="left:895.00px;width:300px;text-align:center;top:254.26px;height:5.88px;line-height:5.88px;font-size:4.2px;color:#333;font-weight:normal;"><i>加</i><i>热</i><i>材</i><i>料</i><i>供</i><i>应</i><i>商</i></div>
<div class="t" style="left:822.50px;width:300px;text-align:center;top:254.26px;height:5.88px;line-height:5.88px;font-size:4.2px;color:#333;font-weight:normal;"><i>办</i><i>公</i><i>用</i><i>品</i><i>供</i><i>应</i><i>商</i></div>
<div class="t" style="left:899.80px;width:300px;text-align:center;top:262.96px;height:5.88px;line-height:5.88px;font-size:4.2px;color:#333;font-weight:normal;"><i>化</i><i>工</i><i>原</i><i>料</i><i>供</i><i>应</i><i>商</i></div>
<div class="t" style="left:822.00px;width:300px;text-align:center;top:262.96px;height:5.88px;line-height:5.88px;font-size:4.2px;color:#333;font-weight:normal;"><i>车</i><i>辆</i><i>供</i><i>应</i><i>商</i></div>
<div class="t" style="left:901.00px;width:300px;text-align:center;top:272.76px;height:5.88px;line-height:5.88px;font-size:4.2px;color:#333;font-weight:normal;"><i>户</i><i>外</i><i>装</i><i>备</i><i>供</i><i>应</i><i>商</i></div>
<div class="t" style="left:820.10px;width:300px;text-align:center;top:272.76px;height:5.88px;line-height:5.88px;font-size:4.2px;color:#333;font-weight:normal;"><i>刷</i><i>漆</i><i>供</i><i>应</i><i>商</i></div>
<div class="t" style="left:899.80px;width:300px;text-align:center;top:282.06px;height:5.88px;line-height:5.88px;font-size:4.2px;color:#333;font-weight:normal;"><i>劳</i><i>工</i><i>材</i><i>料</i><i>供</i><i>应</i><i>商</i></div>
<div class="t" style="left:817.80px;width:300px;text-align:center;top:282.06px;height:5.88px;line-height:5.88px;font-size:4.2px;color:#333;font-weight:normal;"><i>电</i><i>子</i><i>设</i><i>备</i><i>供</i><i>应</i><i>商</i></div>
<div class="t" style="left:890.80px;width:300px;text-align:center;top:291.36px;height:5.88px;line-height:5.88px;font-size:4.2px;color:#333;font-weight:normal;"><i>固</i><i>废</i><i>供</i><i>应</i><i>商</i></div>
<div class="t" style="left:826.70px;width:300px;text-align:center;top:291.36px;height:5.88px;line-height:5.88px;font-size:4.2px;color:#333;font-weight:normal;"><i>包</i><i>材</i><i>供</i><i>应</i><i>商</i></div>
<div class="t" style="left:833.30px;width:300px;text-align:center;top:298.56px;height:5.88px;line-height:5.88px;font-size:4.2px;color:#333;font-weight:normal;"><i>电</i><i>机</i><i>供</i><i>应</i><i>商</i></div>
<div class="t" style="left:883.60px;width:300px;text-align:center;top:298.56px;height:5.88px;line-height:5.88px;font-size:4.2px;color:#333;font-weight:normal;"><i>木</i><i>材</i><i>供</i><i>应</i><i>商</i></div>
<div class="t" style="left:842.90px;width:300px;text-align:center;top:302.76px;height:5.88px;line-height:5.88px;font-size:4.2px;color:#333;font-weight:normal;"><i>水</i><i>果</i><i>供</i><i>应</i><i>商</i></div>
<div class="t" style="left:853.70px;width:300px;text-align:center;top:246.78px;height:6.44px;line-height:6.44px;font-size:4.6px;color:#555;font-weight:normal;">1</div>
<div class="t" style="left:850.10px;width:300px;text-align:center;top:253.38px;height:6.44px;line-height:6.44px;font-size:4.6px;color:#555;font-weight:normal;">0.75</div>
<div class="t" style="left:851.90px;width:300px;text-align:center;top:259.58px;height:6.44px;line-height:6.44px;font-size:4.6px;color:#555;font-weight:normal;">0.5</div>
<div class="t" style="left:850.10px;width:300px;text-align:center;top:266.18px;height:6.44px;line-height:6.44px;font-size:4.6px;color:#555;font-weight:normal;">0.25</div>
<div class="t" style="left:853.70px;width:300px;text-align:center;top:272.48px;height:6.44px;line-height:6.44px;font-size:4.6px;color:#555;font-weight:normal;">0</div>
<div class="a" style="left:1082.40px;top:192.20px;width:115.60px;height:120.80px;background:#fff;border-radius:4px 0 0 0"></div>
<div class="t" style="left:1088.20px;top:196.55px;height:7.70px;line-height:7.70px;font-size:5.5px;color:#333;font-weight:normal;"><i>不</i><i>同</i><i>产</i><i>品</i><i>供</i><i>应</i><i>商</i></div>
<svg class="a" style="left:1082.4px;top:192.2px" width="115.6" height="120.8" viewBox="1082.4 192.2 115.6 120.8"><path d="M1147.90 257.00L1114.62 245.22A35.3 35.3 0 0 1 1181.55 246.33Z" fill="#5c7f4d" stroke="#fff" stroke-width=".4"/><path d="M1147.90 257.00L1181.55 246.33A35.3 35.3 0 0 1 1169.14 285.19Z" fill="#bfd96f" stroke="#fff" stroke-width=".4"/><path d="M1147.90 257.00L1169.14 285.19A35.3 35.3 0 0 1 1127.15 285.56Z" fill="#56be9a" stroke="#fff" stroke-width=".4"/><path d="M1147.90 257.00L1127.15 285.56A35.3 35.3 0 0 1 1114.62 245.22Z" fill="#fb8a52" stroke="#fff" stroke-width=".4"/><path d="M1147.9 257V221.7" stroke="#fff" stroke-width=".5" opacity=".6"/><path d="M1128 228L1124 223H1118M1168 228L1172 223H1178M1114 245L1112 244H1102M1114 269L1111 270H1102M1127 284L1124 290H1117M1147 292V298H1155M1167 286L1172 290H1180M1185 269L1190 270H1195" fill="none" stroke="#9cb38e" stroke-width=".5"/><path d="M1114 245L1110 244H1102" stroke="#c84a4a" stroke-width=".6"/><path d="M1114 269L1111 270H1102M1127 284L1124 290H1117" stroke="#f7a27a" stroke-width=".5" fill="none"/><path d="M1167 286L1172 290H1180" stroke="#f5e08a" stroke-width=".5" fill="none"/><path d="M1147 292V298H1155" stroke="#56be9a" stroke-width=".5" fill="none"/></svg>
<div class="t" style="left:953.40px;width:300px;text-align:center;top:220.56px;height:5.88px;line-height:5.88px;font-size:4.2px;color:#333;font-weight:normal;"><i>鲜</i><i>花</i><i>绿</i><i>植</i></div>
<div class="t" style="left:1039.00px;width:300px;text-align:center;top:220.56px;height:5.88px;line-height:5.88px;font-size:4.2px;color:#333;font-weight:normal;"><i>人</i><i>工</i><i>服</i><i>务</i></div>
<div class="t" style="left:944.80px;width:300px;text-align:center;top:241.46px;height:5.88px;line-height:5.88px;font-size:4.2px;color:#333;font-weight:normal;"><i>团</i><i>购</i></div>
<div class="t" style="left:944.80px;width:300px;text-align:center;top:266.76px;height:5.88px;line-height:5.88px;font-size:4.2px;color:#333;font-weight:normal;"><i>教</i><i>材</i></div>
<div class="t" style="left:962.00px;width:300px;text-align:center;top:287.16px;height:5.88px;line-height:5.88px;font-size:4.2px;color:#333;font-weight:normal;"><i>手</i><i>机</i></div>
<div class="t" style="left:1012.50px;width:300px;text-align:center;top:295.36px;height:5.88px;line-height:5.88px;font-size:4.2px;color:#333;font-weight:normal;"><i>服</i><i>务</i><i>器</i></div>
<div class="t" style="left:1037.30px;width:300px;text-align:center;top:287.16px;height:5.88px;line-height:5.88px;font-size:4.2px;color:#333;font-weight:normal;"><i>冰</i><i>淇</i><i>淋</i></div>
<div class="t" style="left:1047.60px;width:300px;text-align:center;top:266.76px;height:5.88px;line-height:5.88px;font-size:4.2px;color:#333;font-weight:normal;"><i>危</i></div>
<div class="a" style="left:1094.80px;top:305.20px;width:5.00px;height:4.60px;background:#5c7f4d;border-radius:.8px"></div>
<div class="t" style="left:1101.30px;top:304.56px;height:5.88px;line-height:5.88px;font-size:4.2px;color:#777;font-weight:normal;"><i>人</i><i>工</i><i>服</i><i>务</i></div>
<div class="a" style="left:1123.10px;top:305.20px;width:5.00px;height:4.60px;background:#bfd96f;border-radius:.8px"></div>
<div class="t" style="left:1129.60px;top:304.56px;height:5.88px;line-height:5.88px;font-size:4.2px;color:#777;font-weight:normal;"><i>危</i><i>险</i><i>化</i><i>学</i><i>品</i></div>
<div class="a" style="left:1155.60px;top:305.20px;width:5.00px;height:4.60px;background:#f5d95a;border-radius:.8px"></div>
<div class="t" style="left:1162.10px;top:304.56px;height:5.88px;line-height:5.88px;font-size:4.2px;color:#777;font-weight:normal;"><i>冰</i><i>淇</i><i>淋</i></div>
<div class="a" style="left:1179.30px;top:305.20px;width:5.00px;height:4.60px;background:#fb8a52;border-radius:.8px"></div>
<div class="t" style="left:1185.80px;top:304.56px;height:5.88px;line-height:5.88px;font-size:4.2px;color:#777;font-weight:normal;"><i>输</i><i>液</i>IT</div>
<div class="a" style="left:1198.00px;top:154.00px;width:4.00px;height:159.00px;background:#fff"></div>
<div class="a" style="left:1202.00px;top:154.00px;width:3.50px;height:159.90px;background:#eff1f5"></div>
<div class="a" style="left:741.00px;top:310.70px;width:442.40px;height:2.70px;background:#b0b0b0;border-radius:1.5px"></div>
<div class="a" style="left:8.70px;top:346.00px;width:584.10px;height:286.20px;border:2px solid #e3ecfc;border-radius:9px;background:#eff1f5;box-sizing:border-box"></div>
<div class="a" style="left:13.60px;top:351.70px;width:108.90px;height:278.80px;background:#fff;border-radius:5px"></div>
<div class="a" style="left:19.60px;top:357.30px;width:92.00px;height:14.00px;border:.7px solid #e6e6e6;border-radius:7.0px;box-sizing:border-box;background:#fff"></div>
<div class="t" style="left:24.10px;top:360.59px;height:7.42px;line-height:7.42px;font-size:5.3px;color:#c6c6c6;font-weight:normal;"><i>请</i><i>输</i><i>入</i><i>表</i><i>单</i>/<i>报</i><i>表</i><i>名</i><i>称</i></div>
<svg class="a" style="left:101.60px;top:361.30px;" width="6" height="6" viewBox="0 0 6 6"><circle cx="2.6" cy="2.6" r="2" fill="none" stroke="#777" stroke-width=".7"/><path d="M4 4L5.5 5.5" stroke="#777" stroke-width=".7"/></svg>
<div class="a" style="left:119.00px;top:374.80px;width:3.50px;height:195.80px;background:#b5b5b5;border-radius:2px"></div>
<div class="a" style="left:19.70px;top:492.00px;width:93.70px;height:16.20px;background:#ecf3fe;border-radius:3px"></div>
<svg class="a" style="left:23.00px;top:380.40px;" width="7" height="6.5" viewBox="0 0 7 6.5"><rect x="2.3" y="0" width="2.4" height="2.2" fill="#1d5ef6"/><path d="M3.5 2.2V3.4M1.2 4.2V3.4H5.8V4.2" stroke="#1d5ef6" stroke-width=".8" fill="none"/><rect x="0" y="4.2" width="2.4" height="2.3" fill="#1d5ef6"/><rect x="4.6" y="4.2" width="2.4" height="2.3" fill="#1d5ef6"/></svg>
<div class="t" style="left:33.80px;top:379.40px;height:8.40px;line-height:8.40px;font-size:6px;color:#3a3a3a;font-weight:normal;"><i>流</i><i>程</i><i>中</i><i>心</i></div>
<svg class="a" style="left:23.10px;top:397.90px;" width="6.4" height="5.3" viewBox="0 0 6.4 5.3"><path d="M0 .5Q0 0 .5 0H2.3L3 .8H5.9Q6.4 .8 6.4 1.3V4.8Q6.4 5.3 5.9 5.3H.5Q0 5.3 0 4.8Z" fill="#1563ff"/></svg>
<div class="t" style="left:33.80px;top:396.30px;height:8.40px;line-height:8.40px;font-size:6px;color:#3a3a3a;font-weight:normal;"><i>供</i><i>应</i><i>商</i><i>管</i><i>理</i></div>
<svg class="a" style="left:23.10px;top:414.70px;" width="6.4" height="5.3" viewBox="0 0 6.4 5.3"><path d="M0 .5Q0 0 .5 0H2.3L3 .8H5.9Q6.4 .8 6.4 1.3V4.8Q6.4 5.3 5.9 5.3H.5Q0 5.3 0 4.8Z" fill="#1563ff"/></svg>
<div class="t" style="left:33.80px;top:413.10px;height:8.40px;line-height:8.40px;font-size:6px;color:#3a3a3a;font-weight:normal;"><i>询</i><i>报</i><i>价</i><i>管</i><i>理</i></div>
<svg class="a" style="left:34.60px;top:431.00px;" width="6.5" height="6" viewBox="0 0 6.5 6"><path d="M6.3 .2L.2 2.8L2.6 3.6L3.4 6Z" fill="#f68c4e"/></svg>
<div class="t" style="left:45.40px;top:429.80px;height:8.40px;line-height:8.40px;font-size:6px;color:#5a5a5a;font-weight:normal;"><i>供</i><i>应</i><i>商</i><i>报</i><i>价</i></div>
<svg class="a" style="left:34.60px;top:447.20px;" width="6.5" height="6" viewBox="0 0 6.5 6"><path d="M.5 0V5.5H6.5" fill="none" stroke="#66c166" stroke-width=".8"/><path d="M1.5 5V3.5L3 2.2L4.2 3.6L6 1.5V5Z" fill="#66c166" opacity=".8"/></svg>
<div class="t" style="left:45.40px;top:446.00px;height:8.40px;line-height:8.40px;font-size:6px;color:#5a5a5a;font-weight:normal;"><i>供</i><i>应</i><i>商</i><i>报</i><i>价</i><i>查</i><i>询</i></div>
<svg class="a" style="left:23.10px;top:464.60px;" width="6.4" height="5.3" viewBox="0 0 6.4 5.3"><path d="M0 .5Q0 0 .5 0H2.3L3 .8H5.9Q6.4 .8 6.4 1.3V4.8Q6.4 5.3 5.9 5.3H.5Q0 5.3 0 4.8Z" fill="#1563ff"/></svg>
<div class="t" style="left:33.80px;top:463.00px;height:8.40px;line-height:8.40px;font-size:6px;color:#3a3a3a;font-weight:normal;"><i>招</i><i>投</i><i>标</i><i>管</i><i>理</i></div>
<svg class="a" style="left:34.90px;top:481.00px;" width="5.6" height="6.2" viewBox="0 0 5.6 6.2"><rect x="0" y="0" width="5.6" height="6.2" rx=".8" fill="#f68c4e" opacity=".9"/><path d="M1.4 2.3H4.2M1.4 3.9H4.2" stroke="#fff" stroke-width=".7"/></svg>
<div class="t" style="left:45.40px;top:479.80px;height:8.40px;line-height:8.40px;font-size:6px;color:#5a5a5a;font-weight:normal;"><i>报</i><i>名</i></div>
<svg class="a" style="left:34.60px;top:497.50px;" width="6.5" height="6" viewBox="0 0 6.5 6"><path d="M6.3 .2L.2 2.8L2.6 3.6L3.4 6Z" fill="#f68c4e"/></svg>
<div class="t" style="left:45.40px;top:496.30px;height:8.40px;line-height:8.40px;font-size:6px;color:#1d5ef6;font-weight:bold;"><i>投</i><i>标</i></div>
<svg class="a" style="left:34.60px;top:514.50px;" width="6.5" height="6" viewBox="0 0 6.5 6"><path d="M.4 3.2L3.3 .4H6.1V3.2L3.2 6Z" fill="#f68c4e"/><circle cx="4.7" cy="1.8" r=".6" fill="#fff"/></svg>
<div class="t" style="left:45.40px;top:513.30px;height:8.40px;line-height:8.40px;font-size:6px;color:#5a5a5a;font-weight:normal;"><i>答</i><i>疑</i></div>
<svg class="a" style="left:34.90px;top:531.20px;" width="5.6" height="6.2" viewBox="0 0 5.6 6.2"><rect x="0" y="0" width="5.6" height="6.2" rx=".8" fill="#4f8af5" opacity=".9"/><path d="M1.4 2.3H4.2M1.4 3.9H4.2" stroke="#fff" stroke-width=".7"/></svg>
<div class="t" style="left:45.40px;top:530.00px;height:8.40px;line-height:8.40px;font-size:6px;color:#5a5a5a;font-weight:normal;"><i>开</i><i>标</i><i>通</i><i>知</i></div>
<svg class="a" style="left:34.90px;top:547.80px;" width="5.6" height="6.2" viewBox="0 0 5.6 6.2"><rect x="0" y="0" width="5.6" height="6.2" rx=".8" fill="#f68c4e" opacity=".9"/><path d="M1.4 2.3H4.2M1.4 3.9H4.2" stroke="#fff" stroke-width=".7"/></svg>
<div class="t" style="left:45.40px;top:546.60px;height:8.40px;line-height:8.40px;font-size:6px;color:#5a5a5a;font-weight:normal;"><i>中</i><i>标</i><i>通</i><i>知</i><i>书</i></div>
<svg class="a" style="left:34.60px;top:564.60px;" width="6.5" height="6" viewBox="0 0 6.5 6"><path d="M.5 0V5.5H6.5" fill="none" stroke="#66c166" stroke-width=".8"/><path d="M1.5 5V3.5L3 2.2L4.2 3.6L6 1.5V5Z" fill="#66c166" opacity=".8"/></svg>
<div class="t" style="left:45.40px;top:563.40px;height:8.40px;line-height:8.40px;font-size:6px;color:#5a5a5a;font-weight:normal;"><i>招</i><i>投</i><i>标</i><i>查</i><i>询</i><i>（</i><i>对</i><i>外</i><i>）</i></div>
<svg class="a" style="left:23.10px;top:581.70px;" width="6.4" height="5.3" viewBox="0 0 6.4 5.3"><path d="M0 .5Q0 0 .5 0H2.3L3 .8H5.9Q6.4 .8 6.4 1.3V4.8Q6.4 5.3 5.9 5.3H.5Q0 5.3 0 4.8Z" fill="#1563ff"/></svg>
<div class="t" style="left:33.80px;top:580.10px;height:8.40px;line-height:8.40px;font-size:6px;color:#3a3a3a;font-weight:normal;"><i>合</i><i>同</i><i>管</i><i>理</i></div>
<svg class="a" style="left:23.10px;top:598.30px;" width="6.4" height="5.3" viewBox="0 0 6.4 5.3"><path d="M0 .5Q0 0 .5 0H2.3L3 .8H5.9Q6.4 .8 6.4 1.3V4.8Q6.4 5.3 5.9 5.3H.5Q0 5.3 0 4.8Z" fill="#1563ff"/></svg>
<div class="t" style="left:33.80px;top:596.70px;height:8.40px;line-height:8.40px;font-size:6px;color:#3a3a3a;font-weight:normal;"><i>订</i><i>单</i><i>协</i><i>同</i></div>
<svg class="a" style="left:23.10px;top:614.90px;" width="6.4" height="5.3" viewBox="0 0 6.4 5.3"><path d="M0 .5Q0 0 .5 0H2.3L3 .8H5.9Q6.4 .8 6.4 1.3V4.8Q6.4 5.3 5.9 5.3H.5Q0 5.3 0 4.8Z" fill="#1563ff"/></svg>
<div class="t" style="left:33.80px;top:613.30px;height:8.40px;line-height:8.40px;font-size:6px;color:#3a3a3a;font-weight:normal;"><i>发</i><i>货</i><i>协</i><i>同</i></div>
<svg class="a" style="left:104.50px;top:380.60px;" width="4" height="6" viewBox="0 0 4 6"><path d="M.6 .5L3 3L.6 5.5" fill="none" stroke="#888" stroke-width=".7"/></svg>
<div class="a" style="left:126.90px;top:351.90px;width:461.10px;height:278.60px;background:#fff;border-radius:5px"></div>
<div class="a" style="left:126.90px;top:370.30px;width:461.10px;height:0.70px;background:#f3f3f3"></div>
<svg class="a" style="left:134.60px;top:358.40px;" width="6" height="6" viewBox="0 0 6 6"><path d="M.3 .6H5.7M.3 3H5.7M.3 5.4H5.7" stroke="#8b9ef5" stroke-width=".9"/><rect x=".3" y="2.4" width="1.5" height="1.2" fill="#4c6df0"/></svg>
<div class="t" style="left:146.00px;top:357.20px;height:8.40px;line-height:8.40px;font-size:6px;color:#333;font-weight:normal;"><i>投</i><i>标</i></div>
<div class="a" style="left:583.40px;top:371.00px;width:3.60px;height:125.20px;background:#b5b5b5;border-radius:2px"></div>
<div class="t" style="left:137.40px;top:378.30px;height:8.40px;line-height:8.40px;font-size:6px;color:#262626;font-weight:normal;"><i>选</i><i>择</i><i>有</i><i>权</i><i>限</i><i>的</i><i>投</i><i>标</i><i>项</i><i>目</i></div>
<div class="t" style="left:137.40px;top:390.40px;height:7.00px;line-height:7.00px;font-size:5px;color:#8795bd;font-weight:normal;"><i>确</i><i>认</i><i>报</i><i>名</i><i>后</i><i>才</i><i>可</i><i>进</i><i>行</i><i>投</i><i>标</i><i>，</i><i>没</i><i>有</i><i>项</i><i>目</i><i>请</i><i>表</i><i>示</i><i>无</i><i>参</i><i>与</i><i>投</i><i>标</i><i>权</i><i>限</i><i>。</i></div>
<div class="t" style="left:137.40px;top:399.10px;height:7.00px;line-height:7.00px;font-size:5px;color:#8795bd;font-weight:normal;"><i>在</i><i>规</i><i>定</i><i>时</i><i>间</i><i>内</i><i>可</i><i>多</i><i>次</i><i>投</i><i>标</i><i>，</i><i>以</i><i>最</i><i>后</i><i>一</i><i>次</i><i>投</i><i>标</i><i>为</i><i>最</i><i>终</i><i>投</i><i>标</i><i>。</i></div>
<div class="a" style="left:137.40px;top:406.10px;width:145.30px;height:12.50px;border:.8px dotted #d0d0d0;box-sizing:border-box"></div>
<div class="t" style="left:60.00px;width:300px;text-align:center;top:408.20px;height:8.40px;line-height:8.40px;font-size:6px;color:#333;font-weight:normal;"><i>选</i><i>择</i><i>投</i><i>标</i><i>项</i><i>目</i></div>
<div class="t" style="left:137.40px;top:427.00px;height:8.40px;line-height:8.40px;font-size:6px;color:#262626;font-weight:normal;"><i>招</i><i>投</i><i>标</i><i>项</i><i>目</i><i>编</i><i>号</i><span style="color:#f04040"> *</span></div>
<div class="a" style="left:137.40px;top:438.10px;width:300.50px;height:12.80px;background:#f5f6f8;border-radius:1px"></div>
<div class="t" style="left:141.50px;top:440.65px;height:7.70px;line-height:7.70px;font-size:5.5px;color:#c3c3c3;font-weight:normal;"><i>暂</i><i>无</i><i>内</i><i>容</i></div>
<div class="t" style="left:137.40px;top:458.60px;height:8.40px;line-height:8.40px;font-size:6px;color:#262626;font-weight:normal;"><i>项</i><i>目</i><i>名</i><i>称</i><span style="color:#f04040"> *</span></div>
<div class="a" style="left:137.40px;top:470.00px;width:300.50px;height:12.30px;background:#f5f6f8;border-radius:1px"></div>
<div class="t" style="left:141.50px;top:472.30px;height:7.70px;line-height:7.70px;font-size:5.5px;color:#c3c3c3;font-weight:normal;"><i>暂</i><i>无</i><i>内</i><i>容</i></div>
<div class="t" style="left:137.40px;top:490.20px;height:8.40px;line-height:8.40px;font-size:6px;color:#262626;font-weight:normal;"><i>本</i><i>次</i><i>投</i><i>标</i><i>时</i><i>间</i></div>
<div class="t" style="left:137.40px;top:502.40px;height:7.00px;line-height:7.00px;font-size:5px;color:#8795bd;font-weight:normal;"><i>需</i><i>在</i><i>投</i><i>标</i><i>开</i><i>始</i><i>时</i><i>间</i><i>和</i><i>结</i><i>束</i><i>时</i><i>间</i><i>之</i><i>内</i><i>才</i><i>可</i><i>投</i><i>标</i><i>。</i></div>
<div class="a" style="left:137.40px;top:510.20px;width:300.50px;height:11.80px;background:#f5f6f8;border-radius:1px"></div>
<div class="t" style="left:141.50px;top:512.25px;height:7.70px;line-height:7.70px;font-size:5.5px;color:#333;font-weight:normal;">2022-08-02 09:52:32</div>
<div class="t" style="left:137.40px;top:530.50px;height:8.40px;line-height:8.40px;font-size:6px;color:#262626;font-weight:normal;"><i>投</i><i>标</i><i>资</i><i>格</i><i>校</i><i>验</i></div>
<div class="a" style="left:137.40px;top:541.30px;width:300.50px;height:13.00px;background:#f5f6f8;border-radius:1px"></div>
<div class="t" style="left:141.50px;top:543.95px;height:7.70px;line-height:7.70px;font-size:5.5px;color:#333;font-weight:normal;"><i>不</i><i>在</i><i>投</i><i>标</i><i>时</i><i>间</i><i>内</i><i>，</i><i>您</i><i>无</i><i>法</i><i>投</i><i>标</i></div>
<div class="t" style="left:137.40px;top:562.10px;height:8.40px;line-height:8.40px;font-size:6px;color:#262626;font-weight:normal;"><i>投</i><i>标</i><i>开</i><i>始</i><i>时</i><i>间</i></div>
<div class="a" style="left:137.40px;top:573.00px;width:300.50px;height:12.90px;background:#f5f6f8;border-radius:1px"></div>
<div class="t" style="left:141.50px;top:575.60px;height:7.70px;line-height:7.70px;font-size:5.5px;color:#c3c3c3;font-weight:normal;"><i>暂</i><i>无</i><i>内</i><i>容</i></div>
<div class="t" style="left:137.40px;top:593.80px;height:8.40px;line-height:8.40px;font-size:6px;color:#262626;font-weight:normal;"><i>投</i><i>标</i><i>结</i><i>束</i><i>时</i><i>间</i></div>
<div class="a" style="left:126.90px;top:605.80px;width:461.10px;height:24.70px;background:#fff;border-radius:0 0 5px 5px"></div>
<div class="a" style="left:126.90px;top:605.80px;width:461.10px;height:0.70px;border-top:.8px dotted #cfcfcf;box-sizing:border-box"></div>
<div class="a" style="left:139.30px;top:612.40px;width:33.30px;height:12.90px;background:#1765f6;border-radius:2px"></div>
<div class="t" style="left:6.00px;width:300px;text-align:center;top:614.70px;height:8.40px;line-height:8.40px;font-size:6px;color:#fff;font-weight:normal;"><i>提</i><i>交</i></div>
<div class="a" style="left:623.20px;top:346.00px;width:584.30px;height:286.20px;border:2px solid #e3ecfc;border-radius:9px;background:#eff1f5;box-sizing:border-box"></div>
<div class="a" style="left:627.60px;top:351.00px;width:109.20px;height:280.00px;background:#fff;border-radius:5px"></div>
<div class="a" style="left:633.60px;top:356.60px;width:81.40px;height:13.70px;border:.7px solid #e6e6e6;border-radius:6.8px;box-sizing:border-box;background:#fff"></div>
<div class="t" style="left:638.10px;top:359.74px;height:7.42px;line-height:7.42px;font-size:5.3px;color:#c6c6c6;font-weight:normal;"><i>请</i><i>输</i><i>入</i><i>表</i><i>单</i>/<i>报</i><i>表</i><i>名</i><i>称</i></div>
<svg class="a" style="left:705.00px;top:360.45px;" width="6" height="6" viewBox="0 0 6 6"><circle cx="2.6" cy="2.6" r="2" fill="none" stroke="#777" stroke-width=".7"/><path d="M4 4L5.5 5.5" stroke="#777" stroke-width=".7"/></svg>
<div class="a" style="left:717.50px;top:357.10px;width:13.00px;height:13.00px;border-radius:50%;background:#edf3fe"></div>
<svg class="a" style="left:720.50px;top:360.10px;" width="7" height="7" viewBox="0 0 7 7"><path d="M3.5 .5V6.5M.5 3.5H6.5" stroke="#1d5ef6" stroke-width="1.1"/></svg>
<div class="a" style="left:633.60px;top:376.30px;width:94.00px;height:16.40px;background:#f3f4f6;border-radius:3px"></div>
<svg class="a" style="left:707.60px;top:381.50px;" width="3" height="6" viewBox="0 0 3 6"><circle cx="1.2" cy="1" r=".6" fill="#888"/><circle cx="1.2" cy="3" r=".6" fill="#888"/><circle cx="1.2" cy="5" r=".6" fill="#888"/></svg>
<svg class="a" style="left:716.40px;top:381.70px;" width="6" height="6" viewBox="0 0 6 6"><circle cx="3" cy="3" r="2.5" fill="none" stroke="#777" stroke-width=".8"/><path d="M1.2 1.2L4.8 4.8" stroke="#777" stroke-width=".7"/></svg>
<div class="a" style="left:733.60px;top:454.60px;width:2.90px;height:87.90px;background:#b5b5b5;border-radius:2px"></div>
<div class="a" style="left:633.80px;top:578.30px;width:93.60px;height:16.80px;background:#ecf3fe;border-radius:3px"></div>
<svg class="a" style="left:637.40px;top:381.90px;" width="6.4" height="5.3" viewBox="0 0 6.4 5.3"><path d="M0 .5Q0 0 .5 0H2.3L3 .8H5.9Q6.4 .8 6.4 1.3V4.8Q6.4 5.3 5.9 5.3H.5Q0 5.3 0 4.8Z" fill="#1563ff"/></svg>
<div class="t" style="left:648.10px;top:380.30px;height:8.40px;line-height:8.40px;font-size:6px;color:#3a3a3a;font-weight:normal;"><i>询</i><i>报</i><i>价</i><i>管</i><i>理</i></div>
<svg class="a" style="left:637.40px;top:399.50px;" width="6.4" height="5.3" viewBox="0 0 6.4 5.3"><path d="M0 .5Q0 0 .5 0H2.3L3 .8H5.9Q6.4 .8 6.4 1.3V4.8Q6.4 5.3 5.9 5.3H.5Q0 5.3 0 4.8Z" fill="#1563ff"/></svg>
<div class="t" style="left:648.10px;top:397.90px;height:8.40px;line-height:8.40px;font-size:6px;color:#3a3a3a;font-weight:normal;"><i>招</i><i>投</i><i>标</i><i>管</i><i>理</i></div>
<svg class="a" style="left:637.40px;top:415.90px;" width="6.4" height="5.3" viewBox="0 0 6.4 5.3"><path d="M0 .5Q0 0 .5 0H2.3L3 .8H5.9Q6.4 .8 6.4 1.3V4.8Q6.4 5.3 5.9 5.3H.5Q0 5.3 0 4.8Z" fill="#1563ff"/></svg>
<div class="t" style="left:648.10px;top:414.30px;height:8.40px;line-height:8.40px;font-size:6px;color:#3a3a3a;font-weight:normal;"><i>合</i><i>同</i><i>管</i><i>理</i></div>
<svg class="a" style="left:637.40px;top:433.20px;" width="6.4" height="5.3" viewBox="0 0 6.4 5.3"><path d="M0 .5Q0 0 .5 0H2.3L3 .8H5.9Q6.4 .8 6.4 1.3V4.8Q6.4 5.3 5.9 5.3H.5Q0 5.3 0 4.8Z" fill="#1563ff"/></svg>
<div class="t" style="left:648.10px;top:431.60px;height:8.40px;line-height:8.40px;font-size:6px;color:#3a3a3a;font-weight:normal;"><i>订</i><i>单</i><i>协</i><i>同</i></div>
<svg class="a" style="left:637.40px;top:449.60px;" width="6.4" height="5.3" viewBox="0 0 6.4 5.3"><path d="M0 .5Q0 0 .5 0H2.3L3 .8H5.9Q6.4 .8 6.4 1.3V4.8Q6.4 5.3 5.9 5.3H.5Q0 5.3 0 4.8Z" fill="#1563ff"/></svg>
<div class="t" style="left:648.10px;top:448.00px;height:8.40px;line-height:8.40px;font-size:6px;color:#3a3a3a;font-weight:normal;"><i>发</i><i>货</i><i>协</i><i>同</i></div>
<svg class="a" style="left:637.40px;top:466.50px;" width="6.4" height="5.3" viewBox="0 0 6.4 5.3"><path d="M0 .5Q0 0 .5 0H2.3L3 .8H5.9Q6.4 .8 6.4 1.3V4.8Q6.4 5.3 5.9 5.3H.5Q0 5.3 0 4.8Z" fill="#1563ff"/></svg>
<div class="t" style="left:648.10px;top:464.90px;height:8.40px;line-height:8.40px;font-size:6px;color:#3a3a3a;font-weight:normal;"><i>质</i><i>量</i><i>协</i><i>同</i></div>
<svg class="a" style="left:637.40px;top:483.40px;" width="6.4" height="5.3" viewBox="0 0 6.4 5.3"><path d="M0 .5Q0 0 .5 0H2.3L3 .8H5.9Q6.4 .8 6.4 1.3V4.8Q6.4 5.3 5.9 5.3H.5Q0 5.3 0 4.8Z" fill="#1563ff"/></svg>
<div class="t" style="left:648.10px;top:481.80px;height:8.40px;line-height:8.40px;font-size:6px;color:#3a3a3a;font-weight:normal;"><i>库</i><i>存</i><i>管</i><i>理</i></div>
<svg class="a" style="left:637.40px;top:500.20px;" width="6.4" height="5.3" viewBox="0 0 6.4 5.3"><path d="M0 .5Q0 0 .5 0H2.3L3 .8H5.9Q6.4 .8 6.4 1.3V4.8Q6.4 5.3 5.9 5.3H.5Q0 5.3 0 4.8Z" fill="#1563ff"/></svg>
<div class="t" style="left:648.10px;top:498.60px;height:8.40px;line-height:8.40px;font-size:6px;color:#3a3a3a;font-weight:normal;"><i>财</i><i>务</i><i>协</i><i>同</i></div>
<svg class="a" style="left:649.50px;top:516.70px;" width="5.6" height="6.2" viewBox="0 0 5.6 6.2"><rect x="0" y="0" width="5.6" height="6.2" rx=".8" fill="#f68c4e" opacity=".9"/><path d="M1.4 2.3H4.2M1.4 3.9H4.2" stroke="#fff" stroke-width=".7"/></svg>
<div class="t" style="left:659.00px;top:515.50px;height:8.40px;line-height:8.40px;font-size:6px;color:#5a5a5a;font-weight:normal;"><i>对</i><i>账</i><i>单</i></div>
<svg class="a" style="left:649.20px;top:533.20px;" width="6.5" height="6" viewBox="0 0 6.5 6"><path d="M.4 3.2L3.3 .4H6.1V3.2L3.2 6Z" fill="#f68c4e"/><circle cx="4.7" cy="1.8" r=".6" fill="#fff"/></svg>
<div class="t" style="left:659.00px;top:532.00px;height:8.40px;line-height:8.40px;font-size:6px;color:#5a5a5a;font-weight:normal;"><i>发</i><i>票</i><i>入</i><i>账</i></div>
<svg class="a" style="left:649.50px;top:550.00px;" width="5.6" height="6.2" viewBox="0 0 5.6 6.2"><rect x="0" y="0" width="5.6" height="6.2" rx=".8" fill="#f68c4e" opacity=".9"/><path d="M1.4 2.3H4.2M1.4 3.9H4.2" stroke="#fff" stroke-width=".7"/></svg>
<div class="t" style="left:659.00px;top:548.80px;height:8.40px;line-height:8.40px;font-size:6px;color:#5a5a5a;font-weight:normal;"><i>付</i><i>款</i><i>单</i></div>
<svg class="a" style="left:649.20px;top:567.10px;" width="6.5" height="6" viewBox="0 0 6.5 6"><path d="M.5 0V5.5H6.5" fill="none" stroke="#66c166" stroke-width=".8"/><path d="M1.5 5V3.5L3 2.2L4.2 3.6L6 1.5V5Z" fill="#66c166" opacity=".8"/></svg>
<div class="t" style="left:659.00px;top:565.90px;height:8.40px;line-height:8.40px;font-size:6px;color:#5a5a5a;font-weight:normal;"><i>财</i><i>务</i><i>账</i><i>单</i><i>查</i><i>询</i></div>
<svg class="a" style="left:649.50px;top:583.90px;" width="5.6" height="6.2" viewBox="0 0 5.6 6.2"><rect x="0" y="0" width="5.6" height="6.2" rx=".8" fill="#66c166" opacity=".9"/><path d="M1.4 2.3H4.2M1.4 3.9H4.2" stroke="#fff" stroke-width=".7"/></svg>
<div class="t" style="left:659.00px;top:582.70px;height:8.40px;line-height:8.40px;font-size:6px;color:#1d5ef6;font-weight:bold;"><i>供</i><i>应</i><i>商</i><i>对</i><i>账</i><i>看</i><i>板</i></div>
<svg class="a" style="left:649.50px;top:600.70px;" width="5.6" height="6.2" viewBox="0 0 5.6 6.2"><rect x="0" y="0" width="5.6" height="6.2" rx=".8" fill="#66c166" opacity=".9"/><path d="M1.4 2.3H4.2M1.4 3.9H4.2" stroke="#fff" stroke-width=".7"/></svg>
<div class="t" style="left:659.00px;top:599.50px;height:8.40px;line-height:8.40px;font-size:6px;color:#5a5a5a;font-weight:normal;"><i>供</i><i>应</i><i>商</i><i>对</i><i>账</i><i>看</i><i>板</i><i>（</i><i>对</i>...</div>
<div class="a" style="left:627.60px;top:611.00px;width:109.20px;height:0.60px;background:#eee"></div>
<svg class="a" style="left:636.70px;top:619.60px;" width="6" height="6" viewBox="0 0 6 6"><path d="M.5 0V5.5H6" fill="none" stroke="#999" stroke-width=".6"/><path d="M2 5V3M3.3 5V2M4.6 5V3.5" stroke="#999" stroke-width=".6"/></svg>
<div class="t" style="left:646.70px;top:618.40px;height:8.40px;line-height:8.40px;font-size:6px;color:#555;font-weight:normal;"><i>视</i><i>图</i></div>
<svg class="a" style="left:671.40px;top:620.10px;" width="5" height="5" viewBox="0 0 5 5"><circle cx="2.5" cy="2.5" r="2.1" fill="none" stroke="#aaa" stroke-width=".7"/><circle cx="2.5" cy="2.5" r=".8" fill="none" stroke="#aaa" stroke-width=".6"/></svg>
<div class="t" style="left:679.00px;top:618.40px;height:8.40px;line-height:8.40px;font-size:6px;color:#555;font-weight:normal;"><i>设</i><i>置</i></div>
<svg class="a" style="left:704.10px;top:619.60px;" width="5" height="6.2" viewBox="0 0 5 6.2"><path d="M.3 1.3H4.7M1.7 1.2V.4H3.3V1.2M.9 1.5L1.3 5.9H3.7L4.1 1.5" fill="none" stroke="#aaa" stroke-width=".6"/></svg>
<div class="t" style="left:712.10px;top:618.40px;height:8.40px;line-height:8.40px;font-size:6px;color:#555;font-weight:normal;"><i>回</i><i>收</i><i>站</i></div>
<div class="a" style="left:740.80px;top:351.00px;width:461.20px;height:20.00px;background:#fff;border-radius:5px 5px 0 0"></div>
<svg class="a" style="left:749.00px;top:357.20px;" width="6" height="6" viewBox="0 0 6 6"><path d="M.3 .6H5.7M.3 3H5.7M.3 5.4H5.7" stroke="#8b9ef5" stroke-width=".9"/><rect x=".3" y="2.4" width="1.5" height="1.2" fill="#4c6df0"/></svg>
<div class="t" style="left:760.10px;top:356.00px;height:8.40px;line-height:8.40px;font-size:6px;color:#333;font-weight:normal;"><i>供</i><i>应</i><i>商</i><i>对</i><i>账</i><i>看</i><i>板</i></div>
<svg class="a" style="left:1123.60px;top:357.20px;" width="6.4" height="6.4" viewBox="0 0 6.4 6.4"><path d="M.4 2V.4H2M4.4 .4H6V2M6 4.4V6H4.4M2 6H.4V4.4" fill="none" stroke="#555" stroke-width=".8"/></svg>
<div class="t" style="left:1132.00px;top:356.20px;height:8.40px;line-height:8.40px;font-size:6px;color:#444;font-weight:normal;"><i>全</i><i>屏</i></div>
<div class="a" style="left:1154.50px;top:354.70px;width:39.70px;height:12.10px;background:#e8f1fe;border:.8px solid #cddffc;border-radius:6.1px;box-sizing:border-box"></div>
<div class="t" style="left:1024.35px;width:300px;text-align:center;top:356.83px;height:7.84px;line-height:7.84px;font-size:5.6px;color:#1d5ef6;font-weight:normal;"><i>编</i><i>辑</i><i>报</i><i>表</i></div>
<div class="a" style="left:1198.00px;top:371.00px;width:4.00px;height:260.00px;background:#fff"></div>
<div class="a" style="left:1198.30px;top:372.00px;width:3.20px;height:78.00px;background:#b5b5b5;border-radius:2px"></div>
<svg class="a" style="left:740.8px;top:370.5px" width="457.2" height="259" viewBox="740.8 370.5 457.2 259"><defs>
<linearGradient id="bnL" x1="0" x2="1"><stop offset="0" stop-color="#0d2e6c"/><stop offset=".06" stop-color="#091f5c"/><stop offset=".16" stop-color="#051352"/><stop offset=".35" stop-color="#020838"/><stop offset=".8" stop-color="#030a3c"/><stop offset=".94" stop-color="#081c58"/><stop offset="1" stop-color="#0f3478"/></linearGradient>
<linearGradient id="cardG" x1="0" y1="0" x2="0" y2="1"><stop offset="0" stop-color="#0b2558"/><stop offset=".12" stop-color="#05124a"/><stop offset=".5" stop-color="#030b3e"/><stop offset="1" stop-color="#030a3a"/></linearGradient>
<linearGradient id="chartG" x1="0" y1="0" x2="0" y2="1"><stop offset="0" stop-color="#0b2c66"/><stop offset=".08" stop-color="#061757"/><stop offset=".25" stop-color="#030b42"/><stop offset="1" stop-color="#020838"/></linearGradient>
<linearGradient id="innerG" x1=".15" y1="0" x2=".85" y2="1"><stop offset="0" stop-color="#2fc6da"/><stop offset=".42" stop-color="#1572a2"/><stop offset=".8" stop-color="#1a2a5e"/><stop offset="1" stop-color="#22194a"/></linearGradient>
<linearGradient id="bandG" x1="0" y1="0" x2="1" y2="1"><stop offset="0" stop-color="#3a8cd4"/><stop offset=".45" stop-color="#5ab8e8"/><stop offset="1" stop-color="#aaf4ea"/></linearGradient>
<filter id="glow" x="-30%" y="-30%" width="160%" height="160%"><feGaussianBlur stdDeviation="1.6"/></filter>
<linearGradient id="a1" x1="0" y1="0" x2="0" y2="1"><stop offset="0" stop-color="#4a78b8" stop-opacity=".85"/><stop offset="1" stop-color="#2a5a98" stop-opacity=".7"/></linearGradient>
<linearGradient id="a2" x1="0" y1="0" x2="0" y2="1"><stop offset="0" stop-color="#189ad8"/><stop offset="1" stop-color="#1184c8"/></linearGradient>
</defs><rect x="740.8" y="370.5" width="457.2" height="259" fill="#020838"/><path d="M740.8 440Q850 420 960 470T1198 450" stroke="#2a4d9a" stroke-width="6" fill="none" opacity=".12"/><rect x="744.4" y="371.5" width="449.3" height="21.5" fill="url(#bnL)"/><path d="M745 388V392.4H749M1193 388V392.4H1189" stroke="#1f6fb0" stroke-width=".7" fill="none"/><rect x="744.4" y="396.8" width="109.7" height="107.6" fill="url(#cardG)"/><path d="M744.9 400.5V397.3H748.1M850.4 397.3H853.6V400.5M853.6 500.7V503.9H850.4M748.1 503.9H744.9V500.7" stroke="#1590c8" stroke-width="0.7" fill="none"/><circle cx="799.25" cy="450.5" r="44.3" fill="none" stroke="#00d8ff" stroke-width="3" opacity=".7" filter="url(#glow)"/><circle cx="799.25" cy="450.5" r="44.1" fill="none" stroke="#14e0fc" stroke-width="1.3"/><path d="M797.69 405.73A44.8 44.8 0 0 1 825.58 414.26" stroke="#15e6ff" stroke-width="3" fill="none"/><path d="M821.65 489.30A44.8 44.8 0 0 1 795.35 495.13" stroke="#15e6ff" stroke-width="3" fill="none"/><path d="M763.95 478.08A44.8 44.8 0 0 1 755.78 461.34" stroke="#15e6ff" stroke-width="3" fill="none"/><path d="M759.69 429.47A44.8 44.8 0 0 1 769.27 417.21" stroke="#15e6ff" stroke-width="3" fill="none"/><path d="M760.97 451.84A38.3 38.3 0 1 1 824.88 478.96" stroke="url(#bandG)" stroke-width="5.2" fill="none"/><path d="M762.05 450.50L758.35 450.50M762.37 445.64L758.70 445.16M763.32 440.87L759.74 439.91M764.88 436.26L761.46 434.85M767.03 431.90L763.83 430.05M769.74 427.85L766.80 425.60M772.95 424.20L770.33 421.58M776.60 420.99L774.35 418.05M780.65 418.28L778.80 415.08M785.01 416.13L783.60 412.71M789.62 414.57L788.66 410.99M794.39 413.62L793.91 409.95M799.25 413.30L799.25 409.60M804.11 413.62L804.59 409.95M808.88 414.57L809.84 410.99M813.49 416.13L814.90 412.71M817.85 418.28L819.70 415.08M821.90 420.99L824.15 418.05M825.55 424.20L828.17 421.58M828.76 427.85L831.70 425.60M831.47 431.90L834.67 430.05M833.62 436.26L837.04 434.85M835.18 440.87L838.76 439.91M836.13 445.64L839.80 445.16M836.45 450.50L840.15 450.50M836.13 455.36L839.80 455.84M835.18 460.13L838.76 461.09M833.62 464.74L837.04 466.15M831.47 469.10L834.67 470.95M828.76 473.15L831.70 475.40M825.55 476.80L828.17 479.42" stroke="#123a6e" stroke-width=".55" opacity=".9"/><circle cx="799.25" cy="450.5" r="31.7" fill="url(#innerG)" stroke="#3fd0ea" stroke-width=".7"/><rect x="857.7" y="396.8" width="109.6" height="107.6" fill="url(#cardG)"/><path d="M858.2 400.5V397.3H861.4000000000001M963.5999999999999 397.3H966.8V400.5M966.8 500.7V503.9H963.5999999999999M861.4000000000001 503.9H858.2V500.7" stroke="#1590c8" stroke-width="0.7" fill="none"/><circle cx="912.5" cy="450.5" r="44.3" fill="none" stroke="#00d8ff" stroke-width="3" opacity=".7" filter="url(#glow)"/><circle cx="912.5" cy="450.5" r="44.1" fill="none" stroke="#14e0fc" stroke-width="1.3"/><path d="M910.94 405.73A44.8 44.8 0 0 1 938.83 414.26" stroke="#15e6ff" stroke-width="3" fill="none"/><path d="M934.90 489.30A44.8 44.8 0 0 1 908.60 495.13" stroke="#15e6ff" stroke-width="3" fill="none"/><path d="M877.20 478.08A44.8 44.8 0 0 1 869.03 461.34" stroke="#15e6ff" stroke-width="3" fill="none"/><path d="M872.94 429.47A44.8 44.8 0 0 1 882.52 417.21" stroke="#15e6ff" stroke-width="3" fill="none"/><path d="M874.22 451.84A38.3 38.3 0 1 1 938.13 478.96" stroke="url(#bandG)" stroke-width="5.2" fill="none"/><path d="M875.30 450.50L871.60 450.50M875.62 445.64L871.95 445.16M876.57 440.87L872.99 439.91M878.13 436.26L874.71 434.85M880.28 431.90L877.08 430.05M882.99 427.85L880.05 425.60M886.20 424.20L883.58 421.58M889.85 420.99L887.60 418.05M893.90 418.28L892.05 415.08M898.26 416.13L896.85 412.71M902.87 414.57L901.91 410.99M907.64 413.62L907.16 409.95M912.50 413.30L912.50 409.60M917.36 413.62L917.84 409.95M922.13 414.57L923.09 410.99M926.74 416.13L928.15 412.71M931.10 418.28L932.95 415.08M935.15 420.99L937.40 418.05M938.80 424.20L941.42 421.58M942.01 427.85L944.95 425.60M944.72 431.90L947.92 430.05M946.87 436.26L950.29 434.85M948.43 440.87L952.01 439.91M949.38 445.64L953.05 445.16M949.70 450.50L953.40 450.50M949.38 455.36L953.05 455.84M948.43 460.13L952.01 461.09M946.87 464.74L950.29 466.15M944.72 469.10L947.92 470.95M942.01 473.15L944.95 475.40M938.80 476.80L941.42 479.42" stroke="#123a6e" stroke-width=".55" opacity=".9"/><circle cx="912.5" cy="450.5" r="31.7" fill="url(#innerG)" stroke="#3fd0ea" stroke-width=".7"/><rect x="971.1" y="396.8" width="109.5" height="107.6" fill="url(#cardG)"/><path d="M971.6 400.5V397.3H974.8000000000001M1076.8999999999999 397.3H1080.1V400.5M1080.1 500.7V503.9H1076.8999999999999M974.8000000000001 503.9H971.6V500.7" stroke="#1590c8" stroke-width="0.7" fill="none"/><circle cx="1025.85" cy="450.5" r="44.3" fill="none" stroke="#00d8ff" stroke-width="3" opacity=".7" filter="url(#glow)"/><circle cx="1025.85" cy="450.5" r="44.1" fill="none" stroke="#14e0fc" stroke-width="1.3"/><path d="M1024.29 405.73A44.8 44.8 0 0 1 1052.18 414.26" stroke="#15e6ff" stroke-width="3" fill="none"/><path d="M1048.25 489.30A44.8 44.8 0 0 1 1021.95 495.13" stroke="#15e6ff" stroke-width="3" fill="none"/><path d="M990.55 478.08A44.8 44.8 0 0 1 982.38 461.34" stroke="#15e6ff" stroke-width="3" fill="none"/><path d="M986.29 429.47A44.8 44.8 0 0 1 995.87 417.21" stroke="#15e6ff" stroke-width="3" fill="none"/><path d="M987.57 451.84A38.3 38.3 0 1 1 1051.48 478.96" stroke="url(#bandG)" stroke-width="5.2" fill="none"/><path d="M988.65 450.50L984.95 450.50M988.97 445.64L985.30 445.16M989.92 440.87L986.34 439.91M991.48 436.26L988.06 434.85M993.63 431.90L990.43 430.05M996.34 427.85L993.40 425.60M999.55 424.20L996.93 421.58M1003.20 420.99L1000.95 418.05M1007.25 418.28L1005.40 415.08M1011.61 416.13L1010.20 412.71M1016.22 414.57L1015.26 410.99M1020.99 413.62L1020.51 409.95M1025.85 413.30L1025.85 409.60M1030.71 413.62L1031.19 409.95M1035.48 414.57L1036.44 410.99M1040.09 416.13L1041.50 412.71M1044.45 418.28L1046.30 415.08M1048.50 420.99L1050.75 418.05M1052.15 424.20L1054.77 421.58M1055.36 427.85L1058.30 425.60M1058.07 431.90L1061.27 430.05M1060.22 436.26L1063.64 434.85M1061.78 440.87L1065.36 439.91M1062.73 445.64L1066.40 445.16M1063.05 450.50L1066.75 450.50M1062.73 455.36L1066.40 455.84M1061.78 460.13L1065.36 461.09M1060.22 464.74L1063.64 466.15M1058.07 469.10L1061.27 470.95M1055.36 473.15L1058.30 475.40M1052.15 476.80L1054.77 479.42" stroke="#123a6e" stroke-width=".55" opacity=".9"/><circle cx="1025.85" cy="450.5" r="31.7" fill="url(#innerG)" stroke="#3fd0ea" stroke-width=".7"/><rect x="1085.2" y="396.8" width="108.5" height="107.6" fill="url(#cardG)"/><path d="M1085.7 400.5V397.3H1088.9M1190.0 397.3H1193.2V400.5M1193.2 500.7V503.9H1190.0M1088.9 503.9H1085.7V500.7" stroke="#1590c8" stroke-width="0.7" fill="none"/><circle cx="1139.45" cy="450.5" r="44.3" fill="none" stroke="#00d8ff" stroke-width="3" opacity=".7" filter="url(#glow)"/><circle cx="1139.45" cy="450.5" r="44.1" fill="none" stroke="#14e0fc" stroke-width="1.3"/><path d="M1137.89 405.73A44.8 44.8 0 0 1 1165.78 414.26" stroke="#15e6ff" stroke-width="3" fill="none"/><path d="M1161.85 489.30A44.8 44.8 0 0 1 1135.55 495.13" stroke="#15e6ff" stroke-width="3" fill="none"/><path d="M1104.15 478.08A44.8 44.8 0 0 1 1095.98 461.34" stroke="#15e6ff" stroke-width="3" fill="none"/><path d="M1099.89 429.47A44.8 44.8 0 0 1 1109.47 417.21" stroke="#15e6ff" stroke-width="3" fill="none"/><path d="M1101.17 451.84A38.3 38.3 0 1 1 1165.08 478.96" stroke="url(#bandG)" stroke-width="5.2" fill="none"/><path d="M1102.25 450.50L1098.55 450.50M1102.57 445.64L1098.90 445.16M1103.52 440.87L1099.94 439.91M1105.08 436.26L1101.66 434.85M1107.23 431.90L1104.03 430.05M1109.94 427.85L1107.00 425.60M1113.15 424.20L1110.53 421.58M1116.80 420.99L1114.55 418.05M1120.85 418.28L1119.00 415.08M1125.21 416.13L1123.80 412.71M1129.82 414.57L1128.86 410.99M1134.59 413.62L1134.11 409.95M1139.45 413.30L1139.45 409.60M1144.31 413.62L1144.79 409.95M1149.08 414.57L1150.04 410.99M1153.69 416.13L1155.10 412.71M1158.05 418.28L1159.90 415.08M1162.10 420.99L1164.35 418.05M1165.75 424.20L1168.37 421.58M1168.96 427.85L1171.90 425.60M1171.67 431.90L1174.87 430.05M1173.82 436.26L1177.24 434.85M1175.38 440.87L1178.96 439.91M1176.33 445.64L1180.00 445.16M1176.65 450.50L1180.35 450.50M1176.33 455.36L1180.00 455.84M1175.38 460.13L1178.96 461.09M1173.82 464.74L1177.24 466.15M1171.67 469.10L1174.87 470.95M1168.96 473.15L1171.90 475.40M1165.75 476.80L1168.37 479.42" stroke="#123a6e" stroke-width=".55" opacity=".9"/><circle cx="1139.45" cy="450.5" r="31.7" fill="url(#innerG)" stroke="#3fd0ea" stroke-width=".7"/><path d="M744.7 512.7V509.2H748.2M963.5 509.2H967V512.7M967 627.5V631H963.5M748.2 631H744.7V627.5" stroke="#1aa7d8" stroke-width="0.8" fill="none"/><rect x="744.7" y="509.2" width="222.3" height="121" fill="url(#chartG)"/><rect x="970.8" y="509.2" width="222.7" height="121" fill="url(#chartG)"/><path d="M745 511V509.5H749M963 509.5H966.5V511M971 511V509.5H975M1189.5 509.5H1193V511" stroke="#19b6e0" stroke-width=".9" fill="none"/><path d="M744.7 570Q790 580 830 595T900 590T967 560" stroke="#8aa0e0" stroke-width="4" fill="none" opacity=".07"/><path d="M850 548Q900 550 967 560" stroke="#8aa0e0" stroke-width="3" fill="none" opacity=".06"/><path d="M970.8 570Q1040 600 1100 590T1193.5 555" stroke="#8aa0e0" stroke-width="4" fill="none" opacity=".07"/><path d="M1040 530Q1120 525 1193.5 540" stroke="#8aa0e0" stroke-width="3" fill="none" opacity=".06"/><path d="M778.5 534.9H954.5" stroke="#b4bad0" stroke-width=".6" opacity=".8"/><path d="M778.5 549H954.5" stroke="#b4bad0" stroke-width=".6" opacity=".8"/><path d="M778.5 563.2H954.5" stroke="#b4bad0" stroke-width=".6" opacity=".8"/><path d="M778.5 577.3H954.5" stroke="#b4bad0" stroke-width=".6" opacity=".8"/><path d="M778.5 591.5H954.5" stroke="#b4bad0" stroke-width=".6" opacity=".8"/><path d="M778.5 605.4H954.5" stroke="#b4bad0" stroke-width=".6" opacity=".8"/><path d="M778.5 619.4H954.5" stroke="#b4bad0" stroke-width=".6" opacity=".8"/><path d="M778.5 534V620" stroke="#b8c0d6" stroke-width=".5"/><path d="M795.9 539.2L831.2 619L866.3 613.3L901.6 619.4L936.4 619.4V619.4H795.9Z" fill="url(#a1)"/><path d="M795.9 573.4L831.2 619L866.3 617L901.6 619.4L936.4 619.4H795.9Z" fill="url(#a2)"/><path d="M795.9 539.2L831.2 619L866.3 613.3L901.6 619.4L936.4 619.4" stroke="#6a9ad8" stroke-width=".8" fill="none"/><path d="M795.9 573.4L831.2 619L866.3 617L901.6 619.4L936.4 619.4" stroke="#d8f4ff" stroke-width=".8" fill="none"/><circle cx="795.9" cy="539.2" r="1.1" fill="#7aaae8"/><circle cx="866.3" cy="613.3" r="1.1" fill="#7aaae8"/><circle cx="901.6" cy="619.4" r="1.1" fill="#7aaae8"/><circle cx="936.4" cy="619.4" r="1.1" fill="#7aaae8"/><circle cx="795.9" cy="573.4" r="1.1" fill="#e8f8ff"/><circle cx="831.2" cy="619" r="1.1" fill="#e8f8ff"/><circle cx="866.3" cy="617" r="1.1" fill="#e8f8ff"/><path d="M1004 534.8H1181" stroke="#b4bad0" stroke-width=".6" opacity=".8"/><path d="M1004 553H1181" stroke="#b4bad0" stroke-width=".6" opacity=".8"/><path d="M1004 571.8H1181" stroke="#b4bad0" stroke-width=".6" opacity=".8"/><path d="M1004 590.3H1181" stroke="#b4bad0" stroke-width=".6" opacity=".8"/><path d="M1004 608.8H1181" stroke="#b4bad0" stroke-width=".6" opacity=".8"/><path d="M1004 627.5H1181" stroke="#b4bad0" stroke-width=".6" opacity=".8"/><path d="M1004 627.5V629.5" stroke="#9aa4bd" stroke-width=".5"/><path d="M1040 627.5V629.5" stroke="#9aa4bd" stroke-width=".5"/><path d="M1075.3 627.5V629.5" stroke="#9aa4bd" stroke-width=".5"/><path d="M1110.3 627.5V629.5" stroke="#9aa4bd" stroke-width=".5"/><path d="M1145.6 627.5V629.5" stroke="#9aa4bd" stroke-width=".5"/><path d="M1181 627.5V629.5" stroke="#9aa4bd" stroke-width=".5"/><rect x="1008.9" y="538.1" width="7.8" height="89.4" fill="#0ea5ef"/><rect x="1043.7" y="626.2" width="8.3" height="1.3" fill="#0ea5ef"/><rect x="1079.2" y="619.7" width="8" height="7.8" fill="#0ea5ef"/></svg>
<div class="t" style="left:821.30px;width:300px;text-align:center;top:373.79px;height:13.02px;line-height:13.02px;font-size:9.3px;color:#2a86ee;font-weight:bold;"><i>财</i><i>务</i><i>对</i><i>账</i></div>
<div class="t" style="left:649.25px;width:300px;text-align:center;top:433.20px;height:8.40px;line-height:8.40px;font-size:6px;color:#dce6f0;font-weight:normal;"><i>订</i><i>单</i><i>总</i><i>金</i><i>额</i></div>
<div class="t" style="left:649.25px;width:300px;text-align:center;top:444.00px;height:14.00px;line-height:14.00px;font-size:12px;color:#3fe095;font-weight:normal;">788944...</div>
<div class="t" style="left:762.50px;width:300px;text-align:center;top:433.20px;height:8.40px;line-height:8.40px;font-size:6px;color:#dce6f0;font-weight:normal;"><i>已</i><i>入</i><i>库</i><i>总</i><i>金</i><i>额</i></div>
<div class="t" style="left:762.50px;width:300px;text-align:center;top:444.00px;height:14.00px;line-height:14.00px;font-size:12px;color:#3fe095;font-weight:normal;">586646...</div>
<div class="t" style="left:875.85px;width:300px;text-align:center;top:433.20px;height:8.40px;line-height:8.40px;font-size:6px;color:#dce6f0;font-weight:normal;"><i>已</i><i>对</i><i>账</i><i>总</i><i>金</i><i>额</i></div>
<div class="t" style="left:875.85px;width:300px;text-align:center;top:444.00px;height:14.00px;line-height:14.00px;font-size:12px;color:#3fe095;font-weight:normal;">24428.9</div>
<div class="t" style="left:989.45px;width:300px;text-align:center;top:433.20px;height:8.40px;line-height:8.40px;font-size:6px;color:#dce6f0;font-weight:normal;"><i>已</i><i>付</i><i>款</i><i>总</i><i>金</i><i>额</i></div>
<div class="t" style="left:989.45px;width:300px;text-align:center;top:444.00px;height:14.00px;line-height:14.00px;font-size:12px;color:#3fe095;font-weight:normal;">392883...</div>
<div class="t" style="left:750.20px;top:514.30px;height:8.40px;line-height:8.40px;font-size:6px;color:#f0f4ff;font-weight:bold;"><i>对</i><i>账</i><i>面</i><i>积</i><i>图</i></div>
<div class="t" style="left:976.90px;top:513.60px;height:8.40px;line-height:8.40px;font-size:6px;color:#f0f4ff;font-weight:bold;"><i>供</i><i>应</i><i>商</i><i>未</i><i>对</i><i>账</i>-<i>开</i><i>票</i>-<i>付</i><i>款</i><i>金</i><i>额</i></div>
<div class="t" style="left:475.20px;width:300px;text-align:right;top:531.75px;height:6.30px;line-height:6.30px;font-size:4.5px;color:#c8d0e0;font-weight:normal;">12000000</div>
<div class="t" style="left:475.20px;width:300px;text-align:right;top:545.85px;height:6.30px;line-height:6.30px;font-size:4.5px;color:#c8d0e0;font-weight:normal;">10000000</div>
<div class="t" style="left:475.20px;width:300px;text-align:right;top:560.05px;height:6.30px;line-height:6.30px;font-size:4.5px;color:#c8d0e0;font-weight:normal;">8000000</div>
<div class="t" style="left:475.20px;width:300px;text-align:right;top:574.15px;height:6.30px;line-height:6.30px;font-size:4.5px;color:#c8d0e0;font-weight:normal;">6000000</div>
<div class="t" style="left:475.20px;width:300px;text-align:right;top:588.35px;height:6.30px;line-height:6.30px;font-size:4.5px;color:#c8d0e0;font-weight:normal;">4000000</div>
<div class="t" style="left:475.20px;width:300px;text-align:right;top:602.25px;height:6.30px;line-height:6.30px;font-size:4.5px;color:#c8d0e0;font-weight:normal;">2000000</div>
<div class="t" style="left:475.20px;width:300px;text-align:right;top:616.25px;height:6.30px;line-height:6.30px;font-size:4.5px;color:#c8d0e0;font-weight:normal;">0</div>
<div class="t" style="left:645.90px;width:300px;text-align:center;top:622.15px;height:6.30px;line-height:6.30px;font-size:4.5px;color:#c8d0e0;font-weight:normal;"><i>瓜</i><i>农</i></div>
<div class="t" style="left:681.20px;width:300px;text-align:center;top:622.15px;height:6.30px;line-height:6.30px;font-size:4.5px;color:#c8d0e0;font-weight:normal;"><i>康</i><i>琴</i></div>
<div class="t" style="left:716.30px;width:300px;text-align:center;top:622.15px;height:6.30px;line-height:6.30px;font-size:4.5px;color:#c8d0e0;font-weight:normal;">Fany</div>
<div class="t" style="left:751.60px;width:300px;text-align:center;top:622.15px;height:6.30px;line-height:6.30px;font-size:4.5px;color:#c8d0e0;font-weight:normal;">mt</div>
<div class="t" style="left:786.40px;width:300px;text-align:center;top:622.15px;height:6.30px;line-height:6.30px;font-size:4.5px;color:#c8d0e0;font-weight:normal;"><i>示</i><i>例</i><i>组</i><i>号</i></div>
<div class="t" style="left:701.30px;width:300px;text-align:right;top:531.86px;height:5.88px;line-height:5.88px;font-size:4.2px;color:#c8d0e0;font-weight:normal;">5000000</div>
<div class="t" style="left:701.30px;width:300px;text-align:right;top:550.06px;height:5.88px;line-height:5.88px;font-size:4.2px;color:#c8d0e0;font-weight:normal;">4000000</div>
<div class="t" style="left:701.30px;width:300px;text-align:right;top:568.86px;height:5.88px;line-height:5.88px;font-size:4.2px;color:#c8d0e0;font-weight:normal;">3000000</div>
<div class="t" style="left:701.30px;width:300px;text-align:right;top:587.36px;height:5.88px;line-height:5.88px;font-size:4.2px;color:#c8d0e0;font-weight:normal;">2000000</div>
<div class="t" style="left:701.30px;width:300px;text-align:right;top:605.86px;height:5.88px;line-height:5.88px;font-size:4.2px;color:#c8d0e0;font-weight:normal;">1000000</div>
<div class="t" style="left:701.30px;width:300px;text-align:right;top:624.56px;height:5.88px;line-height:5.88px;font-size:4.2px;color:#c8d0e0;font-weight:normal;">0</div>
<div class="t" style="left:862.80px;width:300px;text-align:center;top:536.85px;height:6.30px;line-height:6.30px;font-size:4.5px;color:#fff;font-weight:normal;">4840000</div>
<div class="t" style="left:897.80px;width:300px;text-align:center;top:618.75px;height:6.30px;line-height:6.30px;font-size:4.5px;color:#fff;font-weight:normal;">71500</div>
<div class="t" style="left:933.20px;width:300px;text-align:center;top:612.25px;height:6.30px;line-height:6.30px;font-size:4.5px;color:#fff;font-weight:normal;">414400</div>
<div class="t" style="left:872.20px;width:300px;text-align:center;top:620.25px;height:6.30px;line-height:6.30px;font-size:4.5px;color:#fff;font-weight:normal;">0</div>
<div class="t" style="left:881.30px;width:300px;text-align:center;top:620.25px;height:6.30px;line-height:6.30px;font-size:4.5px;color:#fff;font-weight:normal;">0</div>
<div class="t" style="left:907.40px;width:300px;text-align:center;top:620.25px;height:6.30px;line-height:6.30px;font-size:4.5px;color:#fff;font-weight:normal;">0</div>
<div class="t" style="left:916.80px;width:300px;text-align:center;top:620.25px;height:6.30px;line-height:6.30px;font-size:4.5px;color:#fff;font-weight:normal;">0</div>
<div class="t" style="left:942.70px;width:300px;text-align:center;top:620.25px;height:6.30px;line-height:6.30px;font-size:4.5px;color:#fff;font-weight:normal;">0</div>
<div class="t" style="left:952.00px;width:300px;text-align:center;top:620.25px;height:6.30px;line-height:6.30px;font-size:4.5px;color:#fff;font-weight:normal;">0</div>
<div class="t" style="left:968.40px;width:300px;text-align:center;top:620.25px;height:6.30px;line-height:6.30px;font-size:4.5px;color:#fff;font-weight:normal;">0</div>
<div class="t" style="left:977.50px;width:300px;text-align:center;top:620.25px;height:6.30px;line-height:6.30px;font-size:4.5px;color:#fff;font-weight:normal;">0</div>
<div class="t" style="left:987.50px;width:300px;text-align:center;top:620.25px;height:6.30px;line-height:6.30px;font-size:4.5px;color:#fff;font-weight:normal;">0</div>
<div class="t" style="left:1003.20px;width:300px;text-align:center;top:620.25px;height:6.30px;line-height:6.30px;font-size:4.5px;color:#fff;font-weight:normal;">0</div>
<div class="t" style="left:1013.00px;width:300px;text-align:center;top:620.25px;height:6.30px;line-height:6.30px;font-size:4.5px;color:#fff;font-weight:normal;">0</div>
<div class="t" style="left:1022.80px;width:300px;text-align:center;top:620.25px;height:6.30px;line-height:6.30px;font-size:4.5px;color:#fff;font-weight:normal;">0</div>
</body></html>
